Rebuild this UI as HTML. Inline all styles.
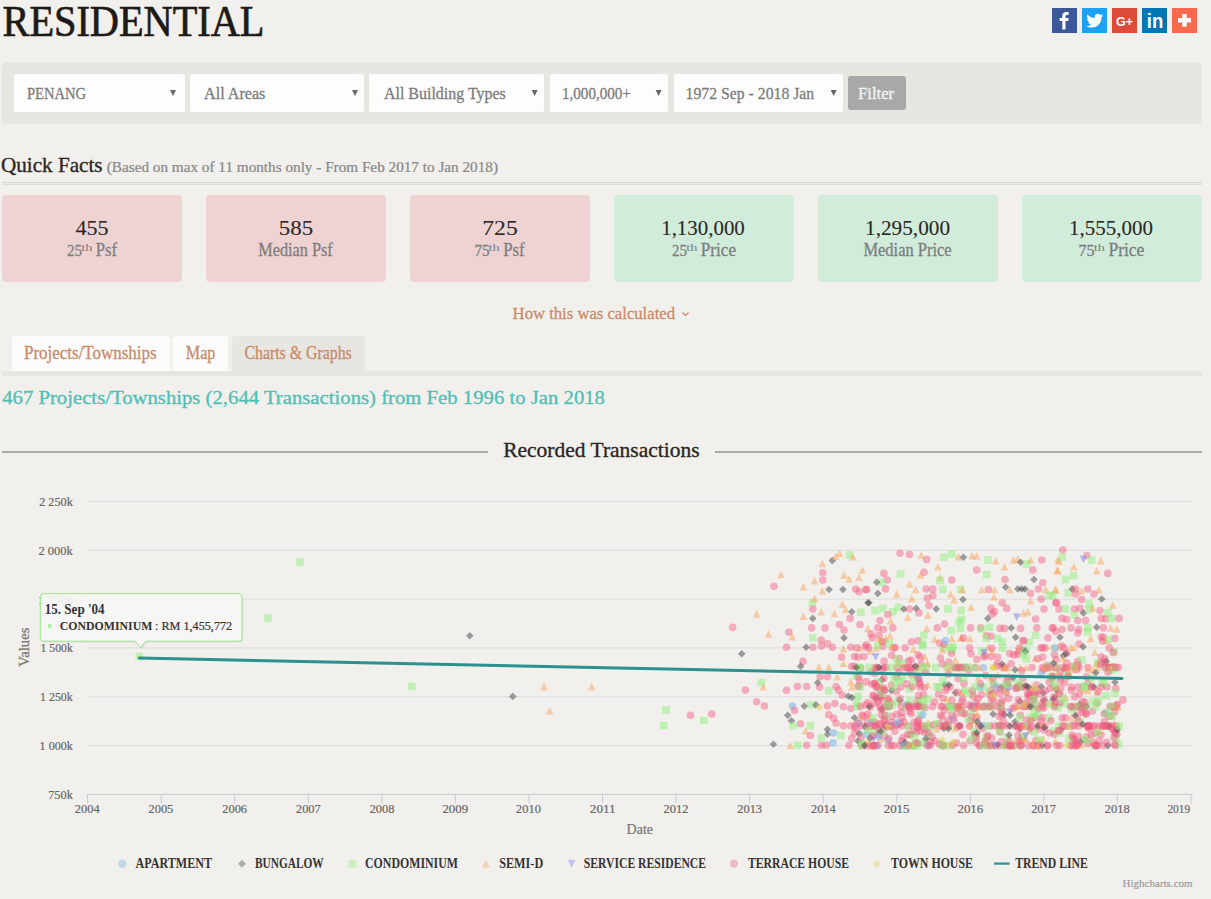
<!DOCTYPE html>
<html><head><meta charset="utf-8"><title>Residential</title>
<style>
html,body{margin:0;padding:0;}
body{width:1211px;height:899px;overflow:hidden;background:#f2f0ec;position:relative;font-family:"Liberation Serif", serif;}
svg text{font-family:"Liberation Serif", serif;}
</style></head><body>
<div style="position:absolute;left:1052px;top:8px;width:25px;height:25px;background:#3b5998;border-radius:0;"></div><div style="position:absolute;left:1082px;top:8px;width:25px;height:25px;background:#1da1f2;border-radius:0;"></div><div style="position:absolute;left:1112px;top:8px;width:25px;height:25px;background:#dd4b39;border-radius:0;"></div><div style="position:absolute;left:1142px;top:8px;width:25px;height:25px;background:#0077b5;border-radius:0;"></div><div style="position:absolute;left:1172px;top:8px;width:25px;height:25px;background:#f8694d;border-radius:0;"></div><div style="position:absolute;left:2px;top:62px;width:1200px;height:62px;background:#e8e6e1;border-radius:4px;"></div><div style="position:absolute;left:14px;top:74px;width:171px;height:38px;background:#fdfdfd;border-radius:2px;"></div><div style="position:absolute;left:190px;top:74px;width:174px;height:38px;background:#fdfdfd;border-radius:2px;"></div><div style="position:absolute;left:369px;top:74px;width:175px;height:38px;background:#fdfdfd;border-radius:2px;"></div><div style="position:absolute;left:550px;top:74px;width:118px;height:38px;background:#fdfdfd;border-radius:2px;"></div><div style="position:absolute;left:674px;top:74px;width:169px;height:38px;background:#fdfdfd;border-radius:2px;"></div><div style="position:absolute;left:848px;top:76px;width:58px;height:34px;background:#a8a8a8;border-radius:3px;"></div><div style="position:absolute;left:2px;top:182px;width:1200px;height:1px;background:#d6d4cf;border-radius:0;"></div><div style="position:absolute;left:2px;top:184px;width:1200px;height:1px;background:#dedcd7;border-radius:0;"></div><div style="position:absolute;left:2px;top:195px;width:180px;height:87px;background:#efd3d3;border-radius:4px;"></div><div style="position:absolute;left:206px;top:195px;width:180px;height:87px;background:#efd3d3;border-radius:4px;"></div><div style="position:absolute;left:410px;top:195px;width:180px;height:87px;background:#efd3d3;border-radius:4px;"></div><div style="position:absolute;left:614px;top:195px;width:180px;height:87px;background:#d1ecdb;border-radius:4px;"></div><div style="position:absolute;left:818px;top:195px;width:180px;height:87px;background:#d1ecdb;border-radius:4px;"></div><div style="position:absolute;left:1022px;top:195px;width:180px;height:87px;background:#d1ecdb;border-radius:4px;"></div><div style="position:absolute;left:12px;top:336px;width:158px;height:36px;background:#fcfcfc;border-radius:4px 4px 0 0;"></div><div style="position:absolute;left:173px;top:336px;width:55px;height:36px;background:#fcfcfc;border-radius:4px 4px 0 0;"></div><div style="position:absolute;left:232px;top:336px;width:133px;height:36px;background:#e8e6e1;border-radius:4px 4px 0 0;"></div><div style="position:absolute;left:2px;top:371px;width:1200px;height:5px;background:#e8e6e1;border-radius:0;"></div><div style="position:absolute;left:2px;top:451px;width:486px;height:2px;background:#aba9a4;border-radius:0;"></div><div style="position:absolute;left:715px;top:451px;width:487px;height:2px;background:#aba9a4;border-radius:0;"></div>
<svg width="1211" height="899" style="position:absolute;left:0;top:0">
<text x="2.50" y="35.6" font-size="43.66" fill="#1e1a18" stroke="#1e1a18" stroke-width="0.70" textLength="262.00" lengthAdjust="spacingAndGlyphs">RESIDENTIAL</text><path transform="translate(1052,8)" fill="#fff" d="M10.3 21.4V13.1H7.6V10H10.3V7.9C10.3 5.3 11.8 4 14.2 4C15.3 4 16.3 4.1 16.6 4.1V6.9H15C13.7 6.9 13.5 7.5 13.5 8.4V10H16.6L16.2 13.1H13.5V21.4Z"/><path transform="translate(1086.4,12.3) scale(0.7)" fill="#fff" d="M23.954 4.569c-.885.389-1.83.654-2.825.775 1.014-.611 1.794-1.574 2.163-2.723-.951.555-2.005.959-3.127 1.184-.896-.959-2.173-1.559-3.591-1.559-2.717 0-4.92 2.203-4.92 4.917 0 .39.045.765.127 1.124C7.691 8.094 4.066 6.13 1.64 3.161c-.427.722-.666 1.561-.666 2.475 0 1.71.87 3.213 2.188 4.096-.807-.026-1.566-.248-2.228-.616v.061c0 2.385 1.693 4.374 3.946 4.827-.413.111-.849.171-1.296.171-.314 0-.615-.03-.916-.086.631 1.953 2.445 3.377 4.604 3.417-1.68 1.319-3.809 2.105-6.102 2.105-.39 0-.779-.023-1.17-.067 2.189 1.394 4.768 2.209 7.557 2.209 9.054 0 13.999-7.496 13.999-13.986 0-.209 0-.42-.015-.63.961-.689 1.8-1.56 2.46-2.548l-.047-.02z"/><text x="1116" y="26" font-size="13.5" font-weight="bold" fill="#fff" textLength="17" lengthAdjust="spacingAndGlyphs" style="font-family:'Liberation Sans',sans-serif">G+</text><text x="1146.8" y="28.2" font-size="20" font-weight="bold" fill="#fff" textLength="16.5" lengthAdjust="spacingAndGlyphs" style="font-family:'Liberation Sans',sans-serif">in</text><path fill="#fff" d="M1178 18H1191V22.4H1178Z M1182.3 14H1186.7V26.8H1182.3Z"/><text x="27.00" y="99.0" font-size="16.79" fill="#7a7a7a" stroke="#7a7a7a" stroke-width="0.27" textLength="59.00" lengthAdjust="spacingAndGlyphs">PENANG</text><path d="M170.0 90 L176.0 90 L173.0 96 Z" fill="#666"/><text x="204.00" y="99.0" font-size="17.30" fill="#7a7a7a" stroke="#7a7a7a" stroke-width="0.28" textLength="61.40" lengthAdjust="spacingAndGlyphs">All Areas</text><path d="M352.0 90 L358.0 90 L355.0 96 Z" fill="#666"/><text x="384.00" y="99.0" font-size="17.30" fill="#7a7a7a" stroke="#7a7a7a" stroke-width="0.28" textLength="121.80" lengthAdjust="spacingAndGlyphs">All Building Types</text><path d="M531.6 90 L537.6 90 L534.6 96 Z" fill="#666"/><text x="562.00" y="99.0" font-size="16.79" fill="#7a7a7a" stroke="#7a7a7a" stroke-width="0.27" textLength="68.80" lengthAdjust="spacingAndGlyphs">1,000,000+</text><path d="M655.6 90 L661.6 90 L658.6 96 Z" fill="#666"/><text x="685.60" y="99.0" font-size="17.30" fill="#7a7a7a" stroke="#7a7a7a" stroke-width="0.28" textLength="128.60" lengthAdjust="spacingAndGlyphs">1972 Sep - 2018 Jan</text><path d="M830.7 90 L836.7 90 L833.7 96 Z" fill="#666"/><text x="858.00" y="99.0" font-size="17.30" fill="#f4f4f4" stroke="#f4f4f4" stroke-width="0.28" textLength="36.20" lengthAdjust="spacingAndGlyphs">Filter</text><text x="1.00" y="171.8" font-size="20.13" fill="#2a2624" stroke="#2a2624" stroke-width="0.32" textLength="101.60" lengthAdjust="spacingAndGlyphs">Quick Facts</text><text x="106.80" y="171.8" font-size="14.50" fill="#888" stroke="#888" stroke-width="0.23" textLength="391.20" lengthAdjust="spacingAndGlyphs">(Based on max of 11 months only - From Feb 2017 to Jan 2018)</text><text x="512.60" y="319.2" font-size="17.61" fill="#c98a68" stroke="#c98a68" stroke-width="0.28" textLength="162.40" lengthAdjust="spacingAndGlyphs">How this was calculated</text><path d="M682.5 312.5 L685.5 315.5 L688.5 312.5" stroke="#c98a68" stroke-width="1.2" fill="none"/><text x="24.00" y="359.3" font-size="19.34" fill="#c98a68" stroke="#c98a68" stroke-width="0.31" textLength="132.60" lengthAdjust="spacingAndGlyphs">Projects/Townships</text><text x="185.80" y="359.3" font-size="19.34" fill="#c98a68" stroke="#c98a68" stroke-width="0.31" textLength="29.60" lengthAdjust="spacingAndGlyphs">Map</text><text x="244.40" y="359.3" font-size="19.34" fill="#c98a68" stroke="#c98a68" stroke-width="0.31" textLength="107.40" lengthAdjust="spacingAndGlyphs">Charts &amp; Graphs</text><text x="2.20" y="404.3" font-size="19.50" fill="#4ebfb6" stroke="#4ebfb6" stroke-width="0.31" textLength="602.80" lengthAdjust="spacingAndGlyphs">467 Projects/Townships (2,644 Transactions) from Feb 1996 to Jan 2018</text><text x="503.20" y="457.2" font-size="21.54" fill="#2a2624" stroke="#2a2624" stroke-width="0.34" textLength="196.40" lengthAdjust="spacingAndGlyphs">Recorded Transactions</text><text x="75.40" y="234.5" font-size="21.37" fill="#2a2624" stroke="#2a2624" stroke-width="0.09" textLength="33.20" lengthAdjust="spacingAndGlyphs">455</text><text x="278.80" y="234.5" font-size="21.37" fill="#2a2624" stroke="#2a2624" stroke-width="0.09" textLength="34.40" lengthAdjust="spacingAndGlyphs">585</text><text x="482.20" y="234.5" font-size="21.37" fill="#2a2624" stroke="#2a2624" stroke-width="0.09" textLength="35.60" lengthAdjust="spacingAndGlyphs">725</text><text x="661.20" y="234.5" font-size="21.37" fill="#2a2624" stroke="#2a2624" stroke-width="0.09" textLength="83.60" lengthAdjust="spacingAndGlyphs">1,130,000</text><text x="865.00" y="234.5" font-size="21.37" fill="#2a2624" stroke="#2a2624" stroke-width="0.09" textLength="85.00" lengthAdjust="spacingAndGlyphs">1,295,000</text><text x="1069.00" y="234.5" font-size="21.37" fill="#2a2624" stroke="#2a2624" stroke-width="0.09" textLength="84.00" lengthAdjust="spacingAndGlyphs">1,555,000</text><text x="67.00" y="255.8" font-size="17.25" fill="#7d7d7d" stroke="#7d7d7d" stroke-width="0.28" textLength="15.00" lengthAdjust="spacingAndGlyphs">25</text><text x="81.20" y="250.8" font-size="11.00" fill="#7d7d7d" textLength="11.20" lengthAdjust="spacingAndGlyphs">th</text><text x="95.80" y="255.8" font-size="17.77" fill="#7d7d7d" stroke="#7d7d7d" stroke-width="0.28" textLength="21.20" lengthAdjust="spacingAndGlyphs">Psf</text><text x="258.20" y="255.8" font-size="17.77" fill="#7d7d7d" stroke="#7d7d7d" stroke-width="0.28" textLength="74.60" lengthAdjust="spacingAndGlyphs">Median Psf</text><text x="474.40" y="255.8" font-size="17.25" fill="#7d7d7d" stroke="#7d7d7d" stroke-width="0.28" textLength="15.00" lengthAdjust="spacingAndGlyphs">75</text><text x="488.60" y="250.8" font-size="11.00" fill="#7d7d7d" textLength="11.20" lengthAdjust="spacingAndGlyphs">th</text><text x="503.20" y="255.8" font-size="17.77" fill="#7d7d7d" stroke="#7d7d7d" stroke-width="0.28" textLength="21.40" lengthAdjust="spacingAndGlyphs">Psf</text><text x="672.00" y="255.8" font-size="17.25" fill="#7d7d7d" stroke="#7d7d7d" stroke-width="0.28" textLength="15.00" lengthAdjust="spacingAndGlyphs">25</text><text x="686.20" y="250.8" font-size="11.00" fill="#7d7d7d" textLength="11.20" lengthAdjust="spacingAndGlyphs">th</text><text x="700.80" y="255.8" font-size="17.77" fill="#7d7d7d" stroke="#7d7d7d" stroke-width="0.28" textLength="35.20" lengthAdjust="spacingAndGlyphs">Price</text><text x="863.40" y="255.8" font-size="17.77" fill="#7d7d7d" stroke="#7d7d7d" stroke-width="0.28" textLength="88.20" lengthAdjust="spacingAndGlyphs">Median Price</text><text x="1078.60" y="255.8" font-size="17.25" fill="#7d7d7d" stroke="#7d7d7d" stroke-width="0.28" textLength="16.00" lengthAdjust="spacingAndGlyphs">75</text><text x="1093.80" y="250.8" font-size="11.00" fill="#7d7d7d" textLength="11.20" lengthAdjust="spacingAndGlyphs">th</text><text x="1108.40" y="255.8" font-size="17.77" fill="#7d7d7d" stroke="#7d7d7d" stroke-width="0.28" textLength="36.00" lengthAdjust="spacingAndGlyphs">Price</text><rect x="88" y="745.1" width="1104" height="1" fill="#dcdcdc"/><rect x="88" y="696.3" width="1104" height="1" fill="#dcdcdc"/><rect x="88" y="647.4" width="1104" height="1" fill="#dcdcdc"/><rect x="88" y="598.6" width="1104" height="1" fill="#dcdcdc"/><rect x="88" y="549.8" width="1104" height="1" fill="#dcdcdc"/><rect x="88" y="501.0" width="1104" height="1" fill="#dcdcdc"/><rect x="87" y="793.9" width="1106" height="1" fill="#c8ccd4"/><rect x="87.1" y="794" width="1" height="9.5" fill="#c8ccd4"/><rect x="160.7" y="794" width="1" height="9.5" fill="#c8ccd4"/><rect x="234.2" y="794" width="1" height="9.5" fill="#c8ccd4"/><rect x="307.8" y="794" width="1" height="9.5" fill="#c8ccd4"/><rect x="381.3" y="794" width="1" height="9.5" fill="#c8ccd4"/><rect x="454.9" y="794" width="1" height="9.5" fill="#c8ccd4"/><rect x="528.5" y="794" width="1" height="9.5" fill="#c8ccd4"/><rect x="602.0" y="794" width="1" height="9.5" fill="#c8ccd4"/><rect x="675.6" y="794" width="1" height="9.5" fill="#c8ccd4"/><rect x="749.1" y="794" width="1" height="9.5" fill="#c8ccd4"/><rect x="822.7" y="794" width="1" height="9.5" fill="#c8ccd4"/><rect x="896.3" y="794" width="1" height="9.5" fill="#c8ccd4"/><rect x="969.8" y="794" width="1" height="9.5" fill="#c8ccd4"/><rect x="1043.4" y="794" width="1" height="9.5" fill="#c8ccd4"/><rect x="1116.9" y="794" width="1" height="9.5" fill="#c8ccd4"/><rect x="1190.5" y="794" width="1" height="9.5" fill="#c8ccd4"/><text x="74.80" y="812.6" font-size="11.60" fill="#666" stroke="#666" stroke-width="0.19" textLength="24.80" lengthAdjust="spacingAndGlyphs">2004</text><text x="148.52" y="812.6" font-size="11.60" fill="#666" stroke="#666" stroke-width="0.19" textLength="24.80" lengthAdjust="spacingAndGlyphs">2005</text><text x="222.24" y="812.6" font-size="11.60" fill="#666" stroke="#666" stroke-width="0.19" textLength="24.80" lengthAdjust="spacingAndGlyphs">2006</text><text x="295.96" y="812.6" font-size="11.60" fill="#666" stroke="#666" stroke-width="0.19" textLength="24.80" lengthAdjust="spacingAndGlyphs">2007</text><text x="369.68" y="812.6" font-size="11.60" fill="#666" stroke="#666" stroke-width="0.19" textLength="24.80" lengthAdjust="spacingAndGlyphs">2008</text><text x="442.40" y="812.6" font-size="11.60" fill="#666" stroke="#666" stroke-width="0.19" textLength="25.80" lengthAdjust="spacingAndGlyphs">2009</text><text x="516.12" y="812.6" font-size="11.60" fill="#666" stroke="#666" stroke-width="0.19" textLength="24.80" lengthAdjust="spacingAndGlyphs">2010</text><text x="589.84" y="812.6" font-size="11.60" fill="#666" stroke="#666" stroke-width="0.19" textLength="25.80" lengthAdjust="spacingAndGlyphs">2011</text><text x="663.56" y="812.6" font-size="11.60" fill="#666" stroke="#666" stroke-width="0.19" textLength="24.80" lengthAdjust="spacingAndGlyphs">2012</text><text x="737.28" y="812.6" font-size="11.60" fill="#666" stroke="#666" stroke-width="0.19" textLength="24.80" lengthAdjust="spacingAndGlyphs">2013</text><text x="811.00" y="812.6" font-size="11.60" fill="#666" stroke="#666" stroke-width="0.19" textLength="24.80" lengthAdjust="spacingAndGlyphs">2014</text><text x="883.72" y="812.6" font-size="11.60" fill="#666" stroke="#666" stroke-width="0.19" textLength="25.80" lengthAdjust="spacingAndGlyphs">2015</text><text x="957.44" y="812.6" font-size="11.60" fill="#666" stroke="#666" stroke-width="0.19" textLength="25.80" lengthAdjust="spacingAndGlyphs">2016</text><text x="1031.16" y="812.6" font-size="11.60" fill="#666" stroke="#666" stroke-width="0.19" textLength="24.80" lengthAdjust="spacingAndGlyphs">2017</text><text x="1104.88" y="812.6" font-size="11.60" fill="#666" stroke="#666" stroke-width="0.19" textLength="24.80" lengthAdjust="spacingAndGlyphs">2018</text><text x="1167.40" y="812.6" font-size="11.60" fill="#666" stroke="#666" stroke-width="0.19" textLength="22.80" lengthAdjust="spacingAndGlyphs">2019</text><text x="39.20" y="506.0" font-size="13.05" fill="#666" stroke="#666" stroke-width="0.21" textLength="33.60" lengthAdjust="spacingAndGlyphs">2 250k</text><text x="38.40" y="554.8" font-size="13.05" fill="#666" stroke="#666" stroke-width="0.21" textLength="34.40" lengthAdjust="spacingAndGlyphs">2 000k</text><text x="38.20" y="603.6" font-size="13.05" fill="#666" stroke="#666" stroke-width="0.21" textLength="34.60" lengthAdjust="spacingAndGlyphs">1 750k</text><text x="40.60" y="652.4" font-size="13.05" fill="#666" stroke="#666" stroke-width="0.21" textLength="32.20" lengthAdjust="spacingAndGlyphs">1 500k</text><text x="40.00" y="701.3" font-size="13.05" fill="#666" stroke="#666" stroke-width="0.21" textLength="32.80" lengthAdjust="spacingAndGlyphs">1 250k</text><text x="39.60" y="750.1" font-size="13.05" fill="#666" stroke="#666" stroke-width="0.21" textLength="33.20" lengthAdjust="spacingAndGlyphs">1 000k</text><text x="48.20" y="798.9" font-size="13.05" fill="#666" stroke="#666" stroke-width="0.21" textLength="24.60" lengthAdjust="spacingAndGlyphs">750k</text><g transform="translate(28.9,666.8) rotate(-90)"><text x="0.00" y="0.0" font-size="15.57" fill="#777" stroke="#777" stroke-width="0.25" textLength="39.20" lengthAdjust="spacingAndGlyphs">Values</text></g><text x="626.60" y="833.8" font-size="13.84" fill="#777" stroke="#777" stroke-width="0.22" textLength="26.40" lengthAdjust="spacingAndGlyphs">Date</text><text x="1122.60" y="887.2" font-size="11.32" fill="#999" stroke="#999" stroke-width="0.18" textLength="70.00" lengthAdjust="spacingAndGlyphs">Highcharts.com</text><g><rect x="135.6" y="652.8" width="7.6" height="7.6" fill="#90ed7d" fill-opacity="0.5"/><rect x="296.2" y="558.2" width="7.6" height="7.6" fill="#90ed7d" fill-opacity="0.5"/><rect x="264.2" y="614.2" width="7.6" height="7.6" fill="#90ed7d" fill-opacity="0.5"/><rect x="407.9" y="682.7" width="7.6" height="7.6" fill="#90ed7d" fill-opacity="0.5"/><path d="M469.8 631.9L473.6 635.7L469.8 639.5L466.0 635.7Z" fill="#434348" fill-opacity="0.5"/><path d="M512.8 692.6L516.6 696.4L512.8 700.2L509.0 696.4Z" fill="#434348" fill-opacity="0.5"/><path d="M544.0 682.7L547.8 690.3L540.2 690.3Z" fill="#f7a35c" fill-opacity="0.5"/><path d="M549.7 706.8L553.5 714.4L545.9 714.4Z" fill="#f7a35c" fill-opacity="0.5"/><path d="M591.7 682.7L595.5 690.3L587.9 690.3Z" fill="#f7a35c" fill-opacity="0.5"/><rect x="662.2" y="706.2" width="7.6" height="7.6" fill="#90ed7d" fill-opacity="0.5"/><rect x="659.9" y="721.7" width="7.6" height="7.6" fill="#90ed7d" fill-opacity="0.5"/><circle cx="690.5" cy="715.2" r="3.8" fill="#f15c80" fill-opacity="0.46"/><rect x="700.0" y="716.7" width="7.6" height="7.6" fill="#90ed7d" fill-opacity="0.5"/><circle cx="711.7" cy="714.0" r="3.8" fill="#f15c80" fill-opacity="0.46"/><circle cx="732.6" cy="627.4" r="3.8" fill="#f15c80" fill-opacity="0.46"/><path d="M756.6 610.1L760.4 617.7L752.8 617.7Z" fill="#f7a35c" fill-opacity="0.5"/><path d="M768.5 630.2L772.3 637.8L764.7 637.8Z" fill="#f7a35c" fill-opacity="0.5"/><path d="M741.7 650.0L745.5 653.8L741.7 657.6L737.9 653.8Z" fill="#434348" fill-opacity="0.5"/><circle cx="745.4" cy="690.0" r="3.8" fill="#f15c80" fill-opacity="0.46"/><circle cx="756.6" cy="701.7" r="3.8" fill="#f15c80" fill-opacity="0.46"/><circle cx="764.5" cy="706.0" r="3.8" fill="#f15c80" fill-opacity="0.46"/><rect x="757.4" y="678.7" width="7.6" height="7.6" fill="#90ed7d" fill-opacity="0.5"/><path d="M763.2 683.0L767.0 690.6L759.4 690.6Z" fill="#f7a35c" fill-opacity="0.5"/><path d="M773.4 740.4L777.2 744.2L773.4 748.0L769.6 744.2Z" fill="#434348" fill-opacity="0.5"/><path d="M781.1 570.7L784.9 578.3L777.3 578.3Z" fill="#f7a35c" fill-opacity="0.5"/><circle cx="773.9" cy="586.2" r="3.8" fill="#f15c80" fill-opacity="0.46"/><path d="M803.4 582.9L807.2 590.5L799.6 590.5Z" fill="#f7a35c" fill-opacity="0.5"/><path d="M814.5 576.8L818.3 584.4L810.7 584.4Z" fill="#f7a35c" fill-opacity="0.5"/><path d="M822.3 559.6L826.1 567.2L818.5 567.2Z" fill="#f7a35c" fill-opacity="0.5"/><circle cx="822.8" cy="572.8" r="3.8" fill="#f15c80" fill-opacity="0.46"/><circle cx="822.8" cy="580.0" r="3.8" fill="#f15c80" fill-opacity="0.46"/><path d="M832.3 556.8L836.1 560.6L832.3 564.4L828.5 560.6Z" fill="#434348" fill-opacity="0.5"/><path d="M835.6 552.3L839.4 559.9L831.8 559.9Z" fill="#f7a35c" fill-opacity="0.5"/><path d="M839.5 549.5L843.3 557.1L835.7 557.1Z" fill="#f7a35c" fill-opacity="0.5"/><rect x="845.7" y="551.2" width="7.6" height="7.6" fill="#90ed7d" fill-opacity="0.5"/><path d="M852.9 552.9L856.7 560.5L849.1 560.5Z" fill="#f7a35c" fill-opacity="0.5"/><path d="M822.3 586.8L826.1 594.4L818.5 594.4Z" fill="#f7a35c" fill-opacity="0.5"/><path d="M829.0 585.7L832.8 589.5L829.0 593.3L825.2 589.5Z" fill="#434348" fill-opacity="0.5"/><path d="M842.9 585.7L846.7 589.5L842.9 593.3L839.1 589.5Z" fill="#434348" fill-opacity="0.5"/><path d="M844.0 571.2L847.8 578.8L840.2 578.8Z" fill="#f7a35c" fill-opacity="0.5"/><path d="M849.0 575.2L852.8 582.8L845.2 582.8Z" fill="#f7a35c" fill-opacity="0.5"/><path d="M862.3 566.2L866.1 573.8L858.5 573.8Z" fill="#f7a35c" fill-opacity="0.5"/><path d="M859.0 573.5L862.8 581.1L855.2 581.1Z" fill="#f7a35c" fill-opacity="0.5"/><circle cx="855.6" cy="589.0" r="3.8" fill="#f15c80" fill-opacity="0.46"/><circle cx="859.0" cy="591.7" r="3.8" fill="#f15c80" fill-opacity="0.46"/><circle cx="865.7" cy="589.5" r="3.8" fill="#f15c80" fill-opacity="0.46"/><rect x="808.5" y="599.0" width="7.6" height="7.6" fill="#90ed7d" fill-opacity="0.5"/><path d="M814.5 594.6L818.3 602.2L810.7 602.2Z" fill="#f7a35c" fill-opacity="0.5"/><circle cx="812.8" cy="609.0" r="3.8" fill="#f15c80" fill-opacity="0.46"/><path d="M821.2 607.9L825.0 615.5L817.4 615.5Z" fill="#f7a35c" fill-opacity="0.5"/><path d="M803.4 612.4L807.2 620.0L799.6 620.0Z" fill="#f7a35c" fill-opacity="0.5"/><path d="M812.8 614.6L816.6 618.4L812.8 622.2L809.0 618.4Z" fill="#434348" fill-opacity="0.5"/><path d="M834.5 609.6L838.3 617.2L830.7 617.2Z" fill="#f7a35c" fill-opacity="0.5"/><path d="M842.3 600.2L846.1 607.8L838.5 607.8Z" fill="#f7a35c" fill-opacity="0.5"/><path d="M845.6 605.7L849.4 613.3L841.8 613.3Z" fill="#f7a35c" fill-opacity="0.5"/><path d="M851.8 607.9L855.6 611.7L851.8 615.5L848.0 611.7Z" fill="#434348" fill-opacity="0.5"/><rect x="856.9" y="608.5" width="7.6" height="7.6" fill="#90ed7d" fill-opacity="0.5"/><path d="M867.9 599.0L871.7 602.8L867.9 606.6L864.1 602.8Z" fill="#434348" fill-opacity="0.5"/><circle cx="850.1" cy="618.4" r="3.8" fill="#f15c80" fill-opacity="0.46"/><circle cx="811.7" cy="627.9" r="3.8" fill="#f15c80" fill-opacity="0.46"/><circle cx="825.0" cy="627.9" r="3.8" fill="#f15c80" fill-opacity="0.46"/><circle cx="839.5" cy="624.5" r="3.8" fill="#f15c80" fill-opacity="0.46"/><circle cx="844.0" cy="630.1" r="3.8" fill="#f15c80" fill-opacity="0.46"/><circle cx="860.1" cy="624.5" r="3.8" fill="#f15c80" fill-opacity="0.46"/><circle cx="788.9" cy="632.3" r="3.8" fill="#f15c80" fill-opacity="0.46"/><path d="M792.2 633.0L796.0 640.6L788.4 640.6Z" fill="#f7a35c" fill-opacity="0.5"/><rect x="809.0" y="634.1" width="7.6" height="7.6" fill="#90ed7d" fill-opacity="0.5"/><path d="M844.0 634.1L847.8 637.9L844.0 641.7L840.2 637.9Z" fill="#434348" fill-opacity="0.5"/><circle cx="821.2" cy="640.1" r="3.8" fill="#f15c80" fill-opacity="0.46"/><circle cx="900.0" cy="553.3" r="3.8" fill="#f15c80" fill-opacity="0.46"/><circle cx="909.5" cy="554.5" r="3.8" fill="#f15c80" fill-opacity="0.46"/><path d="M921.2 551.2L925.0 558.8L917.4 558.8Z" fill="#f7a35c" fill-opacity="0.5"/><circle cx="926.7" cy="559.5" r="3.8" fill="#f15c80" fill-opacity="0.46"/><rect x="940.2" y="553.4" width="7.6" height="7.6" fill="#90ed7d" fill-opacity="0.5"/><rect x="948.0" y="550.1" width="7.6" height="7.6" fill="#90ed7d" fill-opacity="0.5"/><path d="M958.4 552.9L962.2 560.5L954.6 560.5Z" fill="#f7a35c" fill-opacity="0.5"/><path d="M963.4 553.4L967.2 557.2L963.4 561.0L959.6 557.2Z" fill="#434348" fill-opacity="0.5"/><path d="M937.9 562.9L941.7 570.5L934.1 570.5Z" fill="#f7a35c" fill-opacity="0.5"/><circle cx="924.0" cy="572.3" r="3.8" fill="#f15c80" fill-opacity="0.46"/><path d="M920.6 571.2L924.4 578.8L916.8 578.8Z" fill="#f7a35c" fill-opacity="0.5"/><circle cx="883.9" cy="573.4" r="3.8" fill="#f15c80" fill-opacity="0.46"/><circle cx="887.2" cy="580.0" r="3.8" fill="#f15c80" fill-opacity="0.46"/><rect x="896.8" y="570.1" width="7.6" height="7.6" fill="#90ed7d" fill-opacity="0.5"/><rect x="877.9" y="578.5" width="7.6" height="7.6" fill="#90ed7d" fill-opacity="0.5"/><path d="M876.7 578.5L880.5 582.3L876.7 586.1L872.9 582.3Z" fill="#434348" fill-opacity="0.5"/><path d="M940.0 573.5L943.8 581.1L936.2 581.1Z" fill="#f7a35c" fill-opacity="0.5"/><rect x="936.2" y="576.8" width="7.6" height="7.6" fill="#90ed7d" fill-opacity="0.5"/><circle cx="951.8" cy="580.0" r="3.8" fill="#f15c80" fill-opacity="0.46"/><path d="M909.5 580.1L913.3 587.7L905.7 587.7Z" fill="#f7a35c" fill-opacity="0.5"/><circle cx="866.7" cy="589.5" r="3.8" fill="#f15c80" fill-opacity="0.46"/><circle cx="885.6" cy="589.0" r="3.8" fill="#f15c80" fill-opacity="0.46"/><path d="M877.8 589.6L881.6 593.4L877.8 597.2L874.0 593.4Z" fill="#434348" fill-opacity="0.5"/><path d="M896.7 590.2L900.5 597.8L892.9 597.8Z" fill="#f7a35c" fill-opacity="0.5"/><path d="M915.6 585.7L919.4 593.3L911.8 593.3Z" fill="#f7a35c" fill-opacity="0.5"/><circle cx="926.2" cy="589.0" r="3.8" fill="#f15c80" fill-opacity="0.46"/><circle cx="932.9" cy="589.0" r="3.8" fill="#f15c80" fill-opacity="0.46"/><circle cx="932.9" cy="595.6" r="3.8" fill="#f15c80" fill-opacity="0.46"/><circle cx="927.3" cy="598.4" r="3.8" fill="#f15c80" fill-opacity="0.46"/><rect x="939.1" y="585.7" width="7.6" height="7.6" fill="#90ed7d" fill-opacity="0.5"/><path d="M950.7 590.2L954.5 597.8L946.9 597.8Z" fill="#f7a35c" fill-opacity="0.5"/><rect x="956.9" y="585.7" width="7.6" height="7.6" fill="#90ed7d" fill-opacity="0.5"/><path d="M954.0 596.2L957.8 603.8L950.2 603.8Z" fill="#f7a35c" fill-opacity="0.5"/><path d="M962.9 595.7L966.7 599.5L962.9 603.3L959.1 599.5Z" fill="#434348" fill-opacity="0.5"/><path d="M911.7 594.6L915.5 602.2L907.9 602.2Z" fill="#f7a35c" fill-opacity="0.5"/><path d="M868.9 599.0L872.7 602.8L868.9 606.6L865.1 602.8Z" fill="#434348" fill-opacity="0.5"/><circle cx="929.0" cy="605.6" r="3.8" fill="#f15c80" fill-opacity="0.46"/><path d="M936.2 605.2L940.0 609.0L936.2 612.8L932.4 609.0Z" fill="#434348" fill-opacity="0.5"/><rect x="944.1" y="605.2" width="7.6" height="7.6" fill="#90ed7d" fill-opacity="0.5"/><rect x="957.4" y="606.8" width="7.6" height="7.6" fill="#90ed7d" fill-opacity="0.5"/><rect x="871.2" y="606.8" width="7.6" height="7.6" fill="#90ed7d" fill-opacity="0.5"/><rect x="879.0" y="604.6" width="7.6" height="7.6" fill="#90ed7d" fill-opacity="0.5"/><rect x="889.0" y="607.9" width="7.6" height="7.6" fill="#90ed7d" fill-opacity="0.5"/><rect x="894.6" y="603.5" width="7.6" height="7.6" fill="#90ed7d" fill-opacity="0.5"/><circle cx="887.8" cy="614.5" r="3.8" fill="#f15c80" fill-opacity="0.46"/><path d="M903.9 605.2L907.7 609.0L903.9 612.8L900.1 609.0Z" fill="#434348" fill-opacity="0.5"/><circle cx="909.5" cy="609.0" r="3.8" fill="#f15c80" fill-opacity="0.46"/><path d="M916.2 604.6L920.0 608.4L916.2 612.2L912.4 608.4Z" fill="#434348" fill-opacity="0.5"/><circle cx="919.0" cy="612.9" r="3.8" fill="#f15c80" fill-opacity="0.46"/><path d="M907.8 613.5L911.6 621.1L904.0 621.1Z" fill="#f7a35c" fill-opacity="0.5"/><path d="M927.8 611.2L931.6 618.8L924.0 618.8Z" fill="#f7a35c" fill-opacity="0.5"/><circle cx="880.0" cy="620.6" r="3.8" fill="#f15c80" fill-opacity="0.46"/><circle cx="877.8" cy="627.9" r="3.8" fill="#f15c80" fill-opacity="0.46"/><circle cx="883.4" cy="629.5" r="3.8" fill="#f15c80" fill-opacity="0.46"/><circle cx="892.8" cy="627.9" r="3.8" fill="#f15c80" fill-opacity="0.46"/><path d="M890.6 616.8L894.4 624.4L886.8 624.4Z" fill="#f7a35c" fill-opacity="0.5"/><rect x="955.7" y="618.0" width="7.6" height="7.6" fill="#90ed7d" fill-opacity="0.5"/><circle cx="937.3" cy="627.9" r="3.8" fill="#f15c80" fill-opacity="0.46"/><circle cx="944.5" cy="624.0" r="3.8" fill="#f15c80" fill-opacity="0.46"/><path d="M926.7 624.6L930.5 632.2L922.9 632.2Z" fill="#f7a35c" fill-opacity="0.5"/><path d="M867.8 624.6L871.6 632.2L864.0 632.2Z" fill="#f7a35c" fill-opacity="0.5"/><circle cx="871.1" cy="634.0" r="3.8" fill="#f15c80" fill-opacity="0.46"/><circle cx="872.2" cy="637.9" r="3.8" fill="#f15c80" fill-opacity="0.46"/><path d="M885.6 634.6L889.4 642.2L881.8 642.2Z" fill="#f7a35c" fill-opacity="0.5"/><circle cx="917.8" cy="640.7" r="3.8" fill="#f15c80" fill-opacity="0.46"/><path d="M934.5 635.2L938.3 642.8L930.7 642.8Z" fill="#f7a35c" fill-opacity="0.5"/><rect x="947.4" y="626.8" width="7.6" height="7.6" fill="#90ed7d" fill-opacity="0.5"/><rect x="956.9" y="624.6" width="7.6" height="7.6" fill="#90ed7d" fill-opacity="0.5"/><path d="M951.8 634.6L955.6 642.2L948.0 642.2Z" fill="#f7a35c" fill-opacity="0.5"/><path d="M960.7 634.1L964.5 641.7L956.9 641.7Z" fill="#f7a35c" fill-opacity="0.5"/><path d="M972.2 551.8L976.0 559.4L968.4 559.4Z" fill="#f7a35c" fill-opacity="0.5"/><path d="M976.7 551.8L980.5 559.4L972.9 559.4Z" fill="#f7a35c" fill-opacity="0.5"/><rect x="984.0" y="556.2" width="7.6" height="7.6" fill="#90ed7d" fill-opacity="0.5"/><path d="M995.6 556.8L999.4 564.4L991.8 564.4Z" fill="#f7a35c" fill-opacity="0.5"/><path d="M1004.5 562.9L1008.3 570.5L1000.7 570.5Z" fill="#f7a35c" fill-opacity="0.5"/><circle cx="976.7" cy="570.0" r="3.8" fill="#f15c80" fill-opacity="0.46"/><rect x="982.9" y="570.7" width="7.6" height="7.6" fill="#90ed7d" fill-opacity="0.5"/><circle cx="1005.0" cy="579.5" r="3.8" fill="#f15c80" fill-opacity="0.46"/><path d="M1013.4 556.2L1017.2 563.8L1009.6 563.8Z" fill="#f7a35c" fill-opacity="0.5"/><path d="M1017.8 555.1L1021.6 562.7L1014.0 562.7Z" fill="#f7a35c" fill-opacity="0.5"/><path d="M1020.6 558.4L1024.4 562.2L1020.6 566.0L1016.8 562.2Z" fill="#434348" fill-opacity="0.5"/><rect x="1022.9" y="560.1" width="7.6" height="7.6" fill="#90ed7d" fill-opacity="0.5"/><path d="M1030.6 556.2L1034.4 563.8L1026.8 563.8Z" fill="#f7a35c" fill-opacity="0.5"/><circle cx="1041.8" cy="560.0" r="3.8" fill="#f15c80" fill-opacity="0.46"/><circle cx="1032.9" cy="570.0" r="3.8" fill="#f15c80" fill-opacity="0.46"/><path d="M1034.0 575.7L1037.8 579.5L1034.0 583.3L1030.2 579.5Z" fill="#434348" fill-opacity="0.5"/><circle cx="1042.9" cy="582.8" r="3.8" fill="#f15c80" fill-opacity="0.46"/><path d="M1057.3 566.2L1061.1 573.8L1053.5 573.8Z" fill="#f7a35c" fill-opacity="0.5"/><path d="M1057.9 555.7L1061.7 563.3L1054.1 563.3Z" fill="#f7a35c" fill-opacity="0.5"/><path d="M962.2 585.7L966.0 593.3L958.4 593.3Z" fill="#f7a35c" fill-opacity="0.5"/><path d="M981.7 585.7L985.5 593.3L977.9 593.3Z" fill="#f7a35c" fill-opacity="0.5"/><circle cx="988.4" cy="589.5" r="3.8" fill="#f15c80" fill-opacity="0.46"/><path d="M994.5 585.7L998.3 593.3L990.7 593.3Z" fill="#f7a35c" fill-opacity="0.5"/><path d="M1005.6 583.5L1009.4 587.3L1005.6 591.1L1001.8 587.3Z" fill="#434348" fill-opacity="0.5"/><path d="M1010.0 585.7L1013.8 593.3L1006.2 593.3Z" fill="#f7a35c" fill-opacity="0.5"/><path d="M1017.8 585.2L1021.6 589.0L1017.8 592.8L1014.0 589.0Z" fill="#434348" fill-opacity="0.5"/><path d="M1021.7 585.2L1025.5 589.0L1021.7 592.8L1017.9 589.0Z" fill="#434348" fill-opacity="0.5"/><path d="M1025.0 585.2L1028.8 589.0L1025.0 592.8L1021.2 589.0Z" fill="#434348" fill-opacity="0.5"/><circle cx="1030.6" cy="593.4" r="3.8" fill="#f15c80" fill-opacity="0.46"/><circle cx="1038.4" cy="589.0" r="3.8" fill="#f15c80" fill-opacity="0.46"/><path d="M1045.7 585.7L1049.5 593.3L1041.9 593.3Z" fill="#f7a35c" fill-opacity="0.5"/><path d="M1055.1 585.7L1058.9 593.3L1051.3 593.3Z" fill="#f7a35c" fill-opacity="0.5"/><rect x="1045.2" y="591.8" width="7.6" height="7.6" fill="#90ed7d" fill-opacity="0.5"/><path d="M971.1 603.5L974.9 611.1L967.3 611.1Z" fill="#f7a35c" fill-opacity="0.5"/><path d="M993.9 592.9L997.7 600.5L990.1 600.5Z" fill="#f7a35c" fill-opacity="0.5"/><circle cx="991.1" cy="608.4" r="3.8" fill="#f15c80" fill-opacity="0.46"/><circle cx="994.5" cy="611.7" r="3.8" fill="#f15c80" fill-opacity="0.46"/><circle cx="1002.3" cy="602.8" r="3.8" fill="#f15c80" fill-opacity="0.46"/><circle cx="1006.7" cy="608.4" r="3.8" fill="#f15c80" fill-opacity="0.46"/><circle cx="992.3" cy="614.0" r="3.8" fill="#f15c80" fill-opacity="0.46"/><path d="M987.8 614.6L991.6 618.4L987.8 622.2L984.0 618.4Z" fill="#434348" fill-opacity="0.5"/><path d="M1023.4 609.1L1027.2 616.7L1019.6 616.7Z" fill="#f7a35c" fill-opacity="0.5"/><path d="M1027.9 607.9L1031.7 615.5L1024.1 615.5Z" fill="#f7a35c" fill-opacity="0.5"/><path d="M1030.6 596.8L1034.4 604.4L1026.8 604.4Z" fill="#f7a35c" fill-opacity="0.5"/><path d="M1012.9 613.5L1020.5 613.5L1016.7 621.1Z" fill="#8085e9" fill-opacity="0.55"/><circle cx="1044.0" cy="609.0" r="3.8" fill="#f15c80" fill-opacity="0.46"/><circle cx="1041.2" cy="599.0" r="3.8" fill="#f15c80" fill-opacity="0.46"/><circle cx="1055.7" cy="602.8" r="3.8" fill="#f15c80" fill-opacity="0.46"/><circle cx="1035.6" cy="619.0" r="3.8" fill="#f15c80" fill-opacity="0.46"/><rect x="957.9" y="615.7" width="7.6" height="7.6" fill="#90ed7d" fill-opacity="0.5"/><circle cx="970.6" cy="627.9" r="3.8" fill="#f15c80" fill-opacity="0.46"/><circle cx="980.6" cy="627.9" r="3.8" fill="#f15c80" fill-opacity="0.46"/><rect x="985.7" y="623.5" width="7.6" height="7.6" fill="#90ed7d" fill-opacity="0.5"/><circle cx="1000.0" cy="628.4" r="3.8" fill="#f15c80" fill-opacity="0.46"/><circle cx="1004.5" cy="628.4" r="3.8" fill="#f15c80" fill-opacity="0.46"/><path d="M1011.2 624.1L1015.0 627.9L1011.2 631.7L1007.4 627.9Z" fill="#434348" fill-opacity="0.5"/><circle cx="1020.6" cy="628.4" r="3.8" fill="#f15c80" fill-opacity="0.46"/><circle cx="1036.8" cy="627.9" r="3.8" fill="#f15c80" fill-opacity="0.46"/><circle cx="1052.3" cy="627.9" r="3.8" fill="#f15c80" fill-opacity="0.46"/><circle cx="986.7" cy="635.7" r="3.8" fill="#f15c80" fill-opacity="0.46"/><circle cx="991.1" cy="636.2" r="3.8" fill="#f15c80" fill-opacity="0.46"/><rect x="994.0" y="634.6" width="7.6" height="7.6" fill="#90ed7d" fill-opacity="0.5"/><path d="M1015.6 633.5L1019.4 637.3L1015.6 641.1L1011.8 637.3Z" fill="#434348" fill-opacity="0.5"/><rect x="1031.8" y="631.3" width="7.6" height="7.6" fill="#90ed7d" fill-opacity="0.5"/><circle cx="1047.9" cy="637.9" r="3.8" fill="#f15c80" fill-opacity="0.46"/><path d="M970.0 634.6L973.8 642.2L966.2 642.2Z" fill="#f7a35c" fill-opacity="0.5"/><path d="M961.7 633.5L965.5 641.1L957.9 641.1Z" fill="#f7a35c" fill-opacity="0.5"/><circle cx="1062.8" cy="550.0" r="3.8" fill="#f15c80" fill-opacity="0.46"/><rect x="1058.4" y="553.4" width="7.6" height="7.6" fill="#90ed7d" fill-opacity="0.5"/><path d="M1058.9 557.3L1062.7 564.9L1055.1 564.9Z" fill="#f7a35c" fill-opacity="0.5"/><circle cx="1086.7" cy="555.6" r="3.8" fill="#f15c80" fill-opacity="0.46"/><path d="M1079.6 555.7L1087.2 555.7L1083.4 563.3Z" fill="#8085e9" fill-opacity="0.55"/><rect x="1087.9" y="556.2" width="7.6" height="7.6" fill="#90ed7d" fill-opacity="0.5"/><path d="M1100.6 556.8L1104.4 564.4L1096.8 564.4Z" fill="#f7a35c" fill-opacity="0.5"/><path d="M1073.9 562.9L1077.7 570.5L1070.1 570.5Z" fill="#f7a35c" fill-opacity="0.5"/><path d="M1057.8 566.8L1061.6 574.4L1054.0 574.4Z" fill="#f7a35c" fill-opacity="0.5"/><path d="M1096.7 566.8L1100.5 574.4L1092.9 574.4Z" fill="#f7a35c" fill-opacity="0.5"/><circle cx="1107.8" cy="573.4" r="3.8" fill="#f15c80" fill-opacity="0.46"/><rect x="1061.8" y="575.7" width="7.6" height="7.6" fill="#90ed7d" fill-opacity="0.5"/><rect x="1069.6" y="571.8" width="7.6" height="7.6" fill="#90ed7d" fill-opacity="0.5"/><path d="M1056.1 586.2L1059.9 593.8L1052.3 593.8Z" fill="#f7a35c" fill-opacity="0.5"/><rect x="1049.0" y="591.8" width="7.6" height="7.6" fill="#90ed7d" fill-opacity="0.5"/><rect x="1064.6" y="589.0" width="7.6" height="7.6" fill="#90ed7d" fill-opacity="0.5"/><path d="M1072.2 585.2L1076.0 589.0L1072.2 592.8L1068.4 589.0Z" fill="#434348" fill-opacity="0.5"/><circle cx="1075.6" cy="589.0" r="3.8" fill="#f15c80" fill-opacity="0.46"/><circle cx="1075.6" cy="594.0" r="3.8" fill="#f15c80" fill-opacity="0.46"/><path d="M1081.7 586.8L1085.5 594.4L1077.9 594.4Z" fill="#f7a35c" fill-opacity="0.5"/><circle cx="1087.8" cy="589.0" r="3.8" fill="#f15c80" fill-opacity="0.46"/><circle cx="1094.0" cy="594.0" r="3.8" fill="#f15c80" fill-opacity="0.46"/><path d="M1099.0 585.7L1102.8 593.3L1095.2 593.3Z" fill="#f7a35c" fill-opacity="0.5"/><circle cx="1081.7" cy="599.5" r="3.8" fill="#f15c80" fill-opacity="0.46"/><path d="M1101.7 595.2L1105.5 599.0L1101.7 602.8L1097.9 599.0Z" fill="#434348" fill-opacity="0.5"/><path d="M1112.8 601.2L1116.6 608.8L1109.0 608.8Z" fill="#f7a35c" fill-opacity="0.5"/><circle cx="1056.7" cy="602.8" r="3.8" fill="#f15c80" fill-opacity="0.46"/><circle cx="1058.9" cy="609.0" r="3.8" fill="#f15c80" fill-opacity="0.46"/><rect x="1061.8" y="605.2" width="7.6" height="7.6" fill="#90ed7d" fill-opacity="0.5"/><circle cx="1074.5" cy="609.0" r="3.8" fill="#f15c80" fill-opacity="0.46"/><circle cx="1080.0" cy="608.4" r="3.8" fill="#f15c80" fill-opacity="0.46"/><path d="M1083.4 609.1L1087.2 612.9L1083.4 616.7L1079.6 612.9Z" fill="#434348" fill-opacity="0.5"/><rect x="1085.1" y="600.2" width="7.6" height="7.6" fill="#90ed7d" fill-opacity="0.5"/><rect x="1085.1" y="605.7" width="7.6" height="7.6" fill="#90ed7d" fill-opacity="0.5"/><path d="M1092.8 604.0L1096.6 611.6L1089.0 611.6Z" fill="#f7a35c" fill-opacity="0.5"/><circle cx="1100.0" cy="610.6" r="3.8" fill="#f15c80" fill-opacity="0.46"/><rect x="1104.0" y="609.1" width="7.6" height="7.6" fill="#90ed7d" fill-opacity="0.5"/><circle cx="1119.0" cy="618.4" r="3.8" fill="#f15c80" fill-opacity="0.46"/><circle cx="1062.2" cy="618.4" r="3.8" fill="#f15c80" fill-opacity="0.46"/><circle cx="1066.7" cy="619.5" r="3.8" fill="#f15c80" fill-opacity="0.46"/><rect x="1070.7" y="611.2" width="7.6" height="7.6" fill="#90ed7d" fill-opacity="0.5"/><circle cx="1077.8" cy="620.6" r="3.8" fill="#f15c80" fill-opacity="0.46"/><circle cx="1085.6" cy="620.6" r="3.8" fill="#f15c80" fill-opacity="0.46"/><circle cx="1101.2" cy="618.4" r="3.8" fill="#f15c80" fill-opacity="0.46"/><circle cx="1105.6" cy="619.0" r="3.8" fill="#f15c80" fill-opacity="0.46"/><rect x="1107.9" y="614.6" width="7.6" height="7.6" fill="#90ed7d" fill-opacity="0.5"/><circle cx="1053.3" cy="627.9" r="3.8" fill="#f15c80" fill-opacity="0.46"/><circle cx="1062.2" cy="629.5" r="3.8" fill="#f15c80" fill-opacity="0.46"/><circle cx="1071.1" cy="627.9" r="3.8" fill="#f15c80" fill-opacity="0.46"/><circle cx="1078.9" cy="629.5" r="3.8" fill="#f15c80" fill-opacity="0.46"/><rect x="1084.0" y="624.1" width="7.6" height="7.6" fill="#90ed7d" fill-opacity="0.5"/><rect x="1084.0" y="628.0" width="7.6" height="7.6" fill="#90ed7d" fill-opacity="0.5"/><path d="M1096.7 623.5L1100.5 627.3L1096.7 631.1L1092.9 627.3Z" fill="#434348" fill-opacity="0.5"/><circle cx="1103.4" cy="627.9" r="3.8" fill="#f15c80" fill-opacity="0.46"/><path d="M1110.6 624.1L1114.4 631.7L1106.8 631.7Z" fill="#f7a35c" fill-opacity="0.5"/><path d="M1116.7 625.2L1120.5 632.8L1112.9 632.8Z" fill="#f7a35c" fill-opacity="0.5"/><circle cx="1103.4" cy="637.3" r="3.8" fill="#f15c80" fill-opacity="0.46"/><path d="M1060.0 633.5L1063.8 637.3L1060.0 641.1L1056.2 637.3Z" fill="#434348" fill-opacity="0.5"/><path d="M1090.6 634.6L1094.4 642.2L1086.8 642.2Z" fill="#f7a35c" fill-opacity="0.5"/><circle cx="1077.8" cy="632.9" r="3.8" fill="#f15c80" fill-opacity="0.46"/><circle cx="786.5" cy="647.3" r="3.8" fill="#f15c80" fill-opacity="0.46"/><path d="M806.1 643.5L809.9 647.3L806.1 651.1L802.3 647.3Z" fill="#434348" fill-opacity="0.5"/><circle cx="812.8" cy="647.3" r="3.8" fill="#f15c80" fill-opacity="0.46"/><circle cx="821.4" cy="646.1" r="3.8" fill="#f15c80" fill-opacity="0.46"/><circle cx="827.5" cy="643.7" r="3.8" fill="#f15c80" fill-opacity="0.46"/><circle cx="832.4" cy="647.3" r="3.8" fill="#f15c80" fill-opacity="0.46"/><path d="M843.4 644.8L847.2 652.4L839.6 652.4Z" fill="#f7a35c" fill-opacity="0.5"/><circle cx="850.8" cy="647.3" r="3.8" fill="#f15c80" fill-opacity="0.46"/><circle cx="803.0" cy="661.4" r="3.8" fill="#f15c80" fill-opacity="0.46"/><path d="M800.6 662.5L804.4 666.3L800.6 670.1L796.8 666.3Z" fill="#434348" fill-opacity="0.5"/><path d="M819.0 663.1L822.8 670.7L815.2 670.7Z" fill="#f7a35c" fill-opacity="0.5"/><path d="M828.8 663.1L832.6 670.7L825.0 670.7Z" fill="#f7a35c" fill-opacity="0.5"/><circle cx="841.6" cy="657.1" r="3.8" fill="#f15c80" fill-opacity="0.46"/><path d="M843.4 659.5L847.2 667.1L839.6 667.1Z" fill="#f7a35c" fill-opacity="0.5"/><circle cx="854.5" cy="656.5" r="3.8" fill="#f15c80" fill-opacity="0.46"/><circle cx="858.1" cy="657.1" r="3.8" fill="#f15c80" fill-opacity="0.46"/><circle cx="854.5" cy="666.3" r="3.8" fill="#f15c80" fill-opacity="0.46"/><circle cx="860.6" cy="668.2" r="3.8" fill="#f15c80" fill-opacity="0.46"/><circle cx="820.2" cy="676.7" r="3.8" fill="#f15c80" fill-opacity="0.46"/><circle cx="827.5" cy="676.7" r="3.8" fill="#f15c80" fill-opacity="0.46"/><circle cx="786.5" cy="690.2" r="3.8" fill="#f15c80" fill-opacity="0.46"/><circle cx="797.5" cy="686.5" r="3.8" fill="#f15c80" fill-opacity="0.46"/><circle cx="806.7" cy="686.5" r="3.8" fill="#f15c80" fill-opacity="0.46"/><path d="M817.7 679.0L821.5 682.8L817.7 686.6L813.9 682.8Z" fill="#434348" fill-opacity="0.5"/><circle cx="819.6" cy="687.1" r="3.8" fill="#f15c80" fill-opacity="0.46"/><rect x="825.0" y="687.0" width="7.6" height="7.6" fill="#90ed7d" fill-opacity="0.5"/><path d="M837.3 672.9L841.1 680.5L833.5 680.5Z" fill="#f7a35c" fill-opacity="0.5"/><circle cx="836.1" cy="686.5" r="3.8" fill="#f15c80" fill-opacity="0.46"/><circle cx="838.5" cy="690.2" r="3.8" fill="#f15c80" fill-opacity="0.46"/><circle cx="842.2" cy="695.1" r="3.8" fill="#f15c80" fill-opacity="0.46"/><path d="M848.3 692.5L852.1 696.3L848.3 700.1L844.5 696.3Z" fill="#434348" fill-opacity="0.5"/><rect x="854.3" y="692.5" width="7.6" height="7.6" fill="#90ed7d" fill-opacity="0.5"/><circle cx="859.4" cy="680.4" r="3.8" fill="#f15c80" fill-opacity="0.46"/><circle cx="858.1" cy="686.5" r="3.8" fill="#f15c80" fill-opacity="0.46"/><path d="M850.8 677.8L854.6 685.4L847.0 685.4Z" fill="#f7a35c" fill-opacity="0.5"/><circle cx="792.6" cy="706.1" r="3.8" fill="#7cb5ec" fill-opacity="0.55"/><circle cx="794.5" cy="710.4" r="3.8" fill="#f15c80" fill-opacity="0.46"/><path d="M804.3 702.3L808.1 706.1L804.3 709.9L800.5 706.1Z" fill="#434348" fill-opacity="0.5"/><rect x="807.2" y="701.1" width="7.6" height="7.6" fill="#90ed7d" fill-opacity="0.5"/><path d="M815.9 701.1L819.7 704.9L815.9 708.7L812.1 704.9Z" fill="#434348" fill-opacity="0.5"/><path d="M819.6 703.5L823.4 707.3L819.6 711.1L815.8 707.3Z" fill="#e4d354" fill-opacity="0.55"/><circle cx="827.5" cy="706.1" r="3.8" fill="#f15c80" fill-opacity="0.46"/><circle cx="834.9" cy="703.6" r="3.8" fill="#f15c80" fill-opacity="0.46"/><circle cx="843.4" cy="706.7" r="3.8" fill="#f15c80" fill-opacity="0.46"/><circle cx="850.8" cy="708.5" r="3.8" fill="#f15c80" fill-opacity="0.46"/><rect x="853.1" y="699.8" width="7.6" height="7.6" fill="#90ed7d" fill-opacity="0.5"/><circle cx="865.5" cy="704.9" r="3.8" fill="#f15c80" fill-opacity="0.46"/><circle cx="828.8" cy="714.7" r="3.8" fill="#f15c80" fill-opacity="0.46"/><circle cx="833.6" cy="718.3" r="3.8" fill="#f15c80" fill-opacity="0.46"/><circle cx="836.1" cy="723.2" r="3.8" fill="#f15c80" fill-opacity="0.46"/><path d="M787.7 711.5L791.5 715.3L787.7 719.1L783.9 715.3Z" fill="#434348" fill-opacity="0.5"/><path d="M791.4 717.0L795.2 720.8L791.4 724.6L787.6 720.8Z" fill="#434348" fill-opacity="0.5"/><rect x="789.5" y="721.9" width="7.6" height="7.6" fill="#90ed7d" fill-opacity="0.5"/><circle cx="800.6" cy="723.8" r="3.8" fill="#f15c80" fill-opacity="0.46"/><rect x="806.6" y="721.9" width="7.6" height="7.6" fill="#90ed7d" fill-opacity="0.5"/><path d="M805.5 726.8L809.3 734.4L801.7 734.4Z" fill="#f7a35c" fill-opacity="0.5"/><circle cx="810.4" cy="735.5" r="3.8" fill="#f15c80" fill-opacity="0.46"/><path d="M827.5 725.6L831.3 729.4L827.5 733.2L823.7 729.4Z" fill="#434348" fill-opacity="0.5"/><path d="M827.5 730.4L831.3 734.2L827.5 738.0L823.7 734.2Z" fill="#434348" fill-opacity="0.5"/><circle cx="833.6" cy="733.0" r="3.8" fill="#7cb5ec" fill-opacity="0.55"/><rect x="837.2" y="731.7" width="7.6" height="7.6" fill="#90ed7d" fill-opacity="0.5"/><circle cx="843.4" cy="725.7" r="3.8" fill="#f15c80" fill-opacity="0.46"/><circle cx="850.8" cy="725.7" r="3.8" fill="#f15c80" fill-opacity="0.46"/><circle cx="854.5" cy="733.0" r="3.8" fill="#f15c80" fill-opacity="0.46"/><circle cx="855.7" cy="728.1" r="3.8" fill="#f15c80" fill-opacity="0.46"/><path d="M854.5 713.9L858.3 717.7L854.5 721.5L850.7 717.7Z" fill="#434348" fill-opacity="0.5"/><path d="M859.4 729.8L863.2 733.6L859.4 737.4L855.6 733.6Z" fill="#434348" fill-opacity="0.5"/><circle cx="866.7" cy="734.2" r="3.8" fill="#7cb5ec" fill-opacity="0.55"/><path d="M790.2 741.5L794.0 749.1L786.4 749.1Z" fill="#f7a35c" fill-opacity="0.5"/><rect x="793.7" y="741.5" width="7.6" height="7.6" fill="#90ed7d" fill-opacity="0.5"/><circle cx="806.7" cy="745.3" r="3.8" fill="#f15c80" fill-opacity="0.46"/><circle cx="821.4" cy="745.3" r="3.8" fill="#f15c80" fill-opacity="0.46"/><circle cx="826.3" cy="745.3" r="3.8" fill="#f15c80" fill-opacity="0.46"/><rect x="817.6" y="734.1" width="7.6" height="7.6" fill="#90ed7d" fill-opacity="0.5"/><circle cx="833.0" cy="742.8" r="3.8" fill="#7cb5ec" fill-opacity="0.55"/><circle cx="848.9" cy="745.3" r="3.8" fill="#f15c80" fill-opacity="0.46"/><circle cx="863.0" cy="745.3" r="3.8" fill="#f15c80" fill-opacity="0.46"/><circle cx="888.5" cy="706.5" r="3.8" fill="#f15c80" fill-opacity="0.46"/><circle cx="987.1" cy="737.1" r="3.8" fill="#f15c80" fill-opacity="0.46"/><circle cx="1075.4" cy="667.5" r="3.8" fill="#f15c80" fill-opacity="0.46"/><circle cx="879.3" cy="723.7" r="3.8" fill="#f15c80" fill-opacity="0.46"/><rect x="945.9" y="741.8" width="7.6" height="7.6" fill="#90ed7d" fill-opacity="0.5"/><rect x="961.2" y="686.9" width="7.6" height="7.6" fill="#90ed7d" fill-opacity="0.5"/><path d="M1040.1 702.7L1043.9 710.3L1036.3 710.3Z" fill="#f7a35c" fill-opacity="0.5"/><rect x="1054.4" y="703.8" width="7.6" height="7.6" fill="#90ed7d" fill-opacity="0.5"/><rect x="1003.3" y="734.4" width="7.6" height="7.6" fill="#90ed7d" fill-opacity="0.5"/><rect x="921.7" y="739.0" width="7.6" height="7.6" fill="#90ed7d" fill-opacity="0.5"/><circle cx="879.1" cy="729.9" r="3.8" fill="#f15c80" fill-opacity="0.46"/><circle cx="1087.8" cy="727.3" r="3.8" fill="#f15c80" fill-opacity="0.46"/><circle cx="911.3" cy="713.8" r="3.8" fill="#f15c80" fill-opacity="0.46"/><circle cx="948.9" cy="662.0" r="3.8" fill="#f15c80" fill-opacity="0.46"/><rect x="1030.0" y="694.3" width="7.6" height="7.6" fill="#90ed7d" fill-opacity="0.5"/><circle cx="1022.2" cy="726.1" r="3.8" fill="#f15c80" fill-opacity="0.46"/><circle cx="861.3" cy="745.6" r="3.8" fill="#f15c80" fill-opacity="0.46"/><circle cx="1088.6" cy="726.1" r="3.8" fill="#f15c80" fill-opacity="0.46"/><circle cx="880.7" cy="689.2" r="3.8" fill="#f15c80" fill-opacity="0.46"/><circle cx="875.0" cy="667.5" r="3.8" fill="#f15c80" fill-opacity="0.46"/><circle cx="1109.8" cy="706.5" r="3.8" fill="#f15c80" fill-opacity="0.46"/><circle cx="1039.3" cy="725.4" r="3.8" fill="#f15c80" fill-opacity="0.46"/><circle cx="1062.2" cy="718.1" r="3.8" fill="#f15c80" fill-opacity="0.46"/><circle cx="854.8" cy="726.1" r="3.8" fill="#f15c80" fill-opacity="0.46"/><path d="M970.4 722.3L974.2 726.1L970.4 729.9L966.6 726.1Z" fill="#e4d354" fill-opacity="0.55"/><circle cx="1019.3" cy="687.5" r="3.8" fill="#f15c80" fill-opacity="0.46"/><path d="M870.2 647.1L874.0 654.7L866.4 654.7Z" fill="#f7a35c" fill-opacity="0.5"/><circle cx="896.1" cy="725.0" r="3.8" fill="#f15c80" fill-opacity="0.46"/><circle cx="1097.0" cy="703.2" r="3.8" fill="#f15c80" fill-opacity="0.46"/><circle cx="1026.4" cy="720.0" r="3.8" fill="#f15c80" fill-opacity="0.46"/><circle cx="913.3" cy="706.5" r="3.8" fill="#f15c80" fill-opacity="0.46"/><path d="M944.6 681.0L948.4 684.8L944.6 688.6L940.8 684.8Z" fill="#434348" fill-opacity="0.5"/><circle cx="897.4" cy="724.7" r="3.8" fill="#f15c80" fill-opacity="0.46"/><rect x="996.9" y="702.7" width="7.6" height="7.6" fill="#90ed7d" fill-opacity="0.5"/><circle cx="1060.3" cy="671.4" r="3.8" fill="#f15c80" fill-opacity="0.46"/><circle cx="1038.3" cy="729.0" r="3.8" fill="#f15c80" fill-opacity="0.46"/><circle cx="866.8" cy="726.9" r="3.8" fill="#f15c80" fill-opacity="0.46"/><rect x="882.5" y="722.2" width="7.6" height="7.6" fill="#90ed7d" fill-opacity="0.5"/><circle cx="940.5" cy="658.1" r="3.8" fill="#f15c80" fill-opacity="0.46"/><circle cx="968.6" cy="670.0" r="3.8" fill="#f15c80" fill-opacity="0.46"/><circle cx="1115.5" cy="745.6" r="3.8" fill="#f15c80" fill-opacity="0.46"/><circle cx="882.6" cy="646.4" r="3.8" fill="#f15c80" fill-opacity="0.46"/><circle cx="1101.0" cy="734.7" r="3.8" fill="#f15c80" fill-opacity="0.46"/><rect x="960.6" y="663.7" width="7.6" height="7.6" fill="#90ed7d" fill-opacity="0.5"/><path d="M972.2 702.7L976.0 710.3L968.4 710.3Z" fill="#f7a35c" fill-opacity="0.5"/><circle cx="891.4" cy="726.1" r="3.8" fill="#f15c80" fill-opacity="0.46"/><path d="M926.9 722.3L930.7 729.9L923.1 729.9Z" fill="#f7a35c" fill-opacity="0.5"/><circle cx="999.2" cy="693.3" r="3.8" fill="#f15c80" fill-opacity="0.46"/><path d="M955.5 656.2L959.3 663.8L951.7 663.8Z" fill="#f7a35c" fill-opacity="0.5"/><circle cx="942.9" cy="745.6" r="3.8" fill="#f15c80" fill-opacity="0.46"/><circle cx="891.9" cy="716.3" r="3.8" fill="#f15c80" fill-opacity="0.46"/><circle cx="890.3" cy="702.4" r="3.8" fill="#f15c80" fill-opacity="0.46"/><circle cx="978.0" cy="706.5" r="3.8" fill="#f15c80" fill-opacity="0.46"/><circle cx="871.6" cy="745.6" r="3.8" fill="#f15c80" fill-opacity="0.46"/><circle cx="1008.7" cy="698.4" r="3.8" fill="#f15c80" fill-opacity="0.46"/><circle cx="888.1" cy="740.3" r="3.8" fill="#7cb5ec" fill-opacity="0.55"/><path d="M1020.3 724.9L1024.1 728.7L1020.3 732.5L1016.5 728.7Z" fill="#434348" fill-opacity="0.5"/><circle cx="1077.7" cy="661.6" r="3.8" fill="#f15c80" fill-opacity="0.46"/><circle cx="883.6" cy="667.5" r="3.8" fill="#f15c80" fill-opacity="0.46"/><rect x="1016.1" y="741.4" width="7.6" height="7.6" fill="#90ed7d" fill-opacity="0.5"/><rect x="982.1" y="733.8" width="7.6" height="7.6" fill="#90ed7d" fill-opacity="0.5"/><circle cx="867.3" cy="720.7" r="3.8" fill="#f15c80" fill-opacity="0.46"/><circle cx="983.4" cy="667.8" r="3.8" fill="#7cb5ec" fill-opacity="0.55"/><circle cx="917.0" cy="676.8" r="3.8" fill="#f15c80" fill-opacity="0.46"/><circle cx="921.1" cy="663.8" r="3.8" fill="#f15c80" fill-opacity="0.46"/><circle cx="975.3" cy="667.5" r="3.8" fill="#f15c80" fill-opacity="0.46"/><circle cx="1105.7" cy="713.1" r="3.8" fill="#7cb5ec" fill-opacity="0.55"/><path d="M905.0 663.7L908.8 667.5L905.0 671.3L901.2 667.5Z" fill="#e4d354" fill-opacity="0.55"/><path d="M1041.3 682.9L1045.1 686.7L1041.3 690.5L1037.5 686.7Z" fill="#434348" fill-opacity="0.5"/><circle cx="982.7" cy="728.5" r="3.8" fill="#f15c80" fill-opacity="0.46"/><circle cx="1079.1" cy="644.0" r="3.8" fill="#f15c80" fill-opacity="0.46"/><path d="M1044.0 696.7L1047.8 700.5L1044.0 704.3L1040.2 700.5Z" fill="#434348" fill-opacity="0.5"/><path d="M1005.9 708.5L1013.5 708.5L1009.7 716.1Z" fill="#8085e9" fill-opacity="0.55"/><circle cx="1077.6" cy="715.4" r="3.8" fill="#f15c80" fill-opacity="0.46"/><circle cx="899.2" cy="658.5" r="3.8" fill="#f15c80" fill-opacity="0.46"/><rect x="967.6" y="707.1" width="7.6" height="7.6" fill="#90ed7d" fill-opacity="0.5"/><path d="M882.0 705.7L885.8 709.5L882.0 713.3L878.2 709.5Z" fill="#434348" fill-opacity="0.5"/><circle cx="918.7" cy="678.1" r="3.8" fill="#7cb5ec" fill-opacity="0.55"/><circle cx="891.5" cy="685.4" r="3.8" fill="#f15c80" fill-opacity="0.46"/><path d="M885.3 722.3L889.1 726.1L885.3 729.9L881.5 726.1Z" fill="#434348" fill-opacity="0.5"/><circle cx="918.2" cy="654.8" r="3.8" fill="#f15c80" fill-opacity="0.46"/><circle cx="991.7" cy="738.1" r="3.8" fill="#f15c80" fill-opacity="0.46"/><path d="M881.6 637.3L885.4 641.1L881.6 644.9L877.8 641.1Z" fill="#e4d354" fill-opacity="0.55"/><circle cx="915.5" cy="742.9" r="3.8" fill="#f15c80" fill-opacity="0.46"/><rect x="1090.7" y="741.8" width="7.6" height="7.6" fill="#90ed7d" fill-opacity="0.5"/><path d="M1075.1 711.7L1078.9 715.5L1075.1 719.3L1071.3 715.5Z" fill="#434348" fill-opacity="0.5"/><circle cx="991.2" cy="690.2" r="3.8" fill="#f15c80" fill-opacity="0.46"/><circle cx="1063.1" cy="667.4" r="3.8" fill="#f15c80" fill-opacity="0.46"/><circle cx="916.4" cy="732.0" r="3.8" fill="#f15c80" fill-opacity="0.46"/><circle cx="1008.0" cy="687.0" r="3.8" fill="#f15c80" fill-opacity="0.46"/><circle cx="974.2" cy="708.4" r="3.8" fill="#f15c80" fill-opacity="0.46"/><circle cx="1033.3" cy="745.6" r="3.8" fill="#f15c80" fill-opacity="0.46"/><circle cx="1035.5" cy="717.6" r="3.8" fill="#f15c80" fill-opacity="0.46"/><path d="M928.3 719.1L932.1 726.7L924.5 726.7Z" fill="#f7a35c" fill-opacity="0.5"/><circle cx="1030.8" cy="706.5" r="3.8" fill="#f15c80" fill-opacity="0.46"/><circle cx="886.0" cy="705.7" r="3.8" fill="#7cb5ec" fill-opacity="0.55"/><path d="M1053.2 695.9L1057.0 699.7L1053.2 703.5L1049.4 699.7Z" fill="#434348" fill-opacity="0.5"/><circle cx="893.6" cy="647.9" r="3.8" fill="#f15c80" fill-opacity="0.46"/><circle cx="1074.0" cy="739.6" r="3.8" fill="#f15c80" fill-opacity="0.46"/><circle cx="1101.1" cy="637.0" r="3.8" fill="#f15c80" fill-opacity="0.46"/><circle cx="1071.3" cy="745.6" r="3.8" fill="#f15c80" fill-opacity="0.46"/><path d="M917.8 700.7L921.6 704.5L917.8 708.3L914.0 704.5Z" fill="#434348" fill-opacity="0.5"/><path d="M1017.4 703.5L1021.2 707.3L1017.4 711.1L1013.6 707.3Z" fill="#e4d354" fill-opacity="0.55"/><circle cx="1055.7" cy="631.4" r="3.8" fill="#f15c80" fill-opacity="0.46"/><circle cx="978.2" cy="698.8" r="3.8" fill="#f15c80" fill-opacity="0.46"/><circle cx="983.2" cy="706.9" r="3.8" fill="#f15c80" fill-opacity="0.46"/><path d="M868.6 711.8L872.4 719.4L864.8 719.4Z" fill="#f7a35c" fill-opacity="0.5"/><circle cx="999.6" cy="745.6" r="3.8" fill="#f15c80" fill-opacity="0.46"/><circle cx="1043.1" cy="706.5" r="3.8" fill="#f15c80" fill-opacity="0.46"/><rect x="1049.8" y="727.1" width="7.6" height="7.6" fill="#90ed7d" fill-opacity="0.5"/><circle cx="1003.5" cy="721.5" r="3.8" fill="#f15c80" fill-opacity="0.46"/><circle cx="889.1" cy="706.1" r="3.8" fill="#f15c80" fill-opacity="0.46"/><path d="M983.3 702.7L990.9 702.7L987.1 710.3Z" fill="#8085e9" fill-opacity="0.55"/><path d="M1099.6 727.3L1103.4 734.9L1095.8 734.9Z" fill="#f7a35c" fill-opacity="0.5"/><circle cx="1008.0" cy="687.0" r="3.8" fill="#7cb5ec" fill-opacity="0.55"/><circle cx="948.7" cy="726.1" r="3.8" fill="#f15c80" fill-opacity="0.46"/><rect x="899.2" y="659.7" width="7.6" height="7.6" fill="#90ed7d" fill-opacity="0.5"/><circle cx="903.0" cy="737.9" r="3.8" fill="#f15c80" fill-opacity="0.46"/><circle cx="998.9" cy="726.1" r="3.8" fill="#f15c80" fill-opacity="0.46"/><circle cx="925.1" cy="707.8" r="3.8" fill="#f15c80" fill-opacity="0.46"/><circle cx="961.9" cy="701.5" r="3.8" fill="#f15c80" fill-opacity="0.46"/><rect x="899.3" y="741.8" width="7.6" height="7.6" fill="#90ed7d" fill-opacity="0.5"/><rect x="1094.6" y="696.9" width="7.6" height="7.6" fill="#90ed7d" fill-opacity="0.5"/><circle cx="925.1" cy="732.4" r="3.8" fill="#f15c80" fill-opacity="0.46"/><path d="M1114.2 719.6L1118.0 727.2L1110.4 727.2Z" fill="#f7a35c" fill-opacity="0.5"/><circle cx="990.0" cy="726.1" r="3.8" fill="#f15c80" fill-opacity="0.46"/><path d="M858.1 737.2L861.9 741.0L858.1 744.8L854.3 741.0Z" fill="#434348" fill-opacity="0.5"/><circle cx="1012.6" cy="708.5" r="3.8" fill="#f15c80" fill-opacity="0.46"/><rect x="960.7" y="688.7" width="7.6" height="7.6" fill="#90ed7d" fill-opacity="0.5"/><rect x="978.3" y="647.3" width="7.6" height="7.6" fill="#90ed7d" fill-opacity="0.5"/><circle cx="977.6" cy="706.5" r="3.8" fill="#f15c80" fill-opacity="0.46"/><circle cx="987.8" cy="735.6" r="3.8" fill="#f15c80" fill-opacity="0.46"/><path d="M988.2 643.1L992.0 650.7L984.4 650.7Z" fill="#f7a35c" fill-opacity="0.5"/><circle cx="982.8" cy="725.6" r="3.8" fill="#7cb5ec" fill-opacity="0.55"/><path d="M864.9 722.6L868.7 726.4L864.9 730.2L861.1 726.4Z" fill="#434348" fill-opacity="0.5"/><circle cx="1072.3" cy="706.5" r="3.8" fill="#f15c80" fill-opacity="0.46"/><circle cx="897.1" cy="667.5" r="3.8" fill="#f15c80" fill-opacity="0.46"/><circle cx="1022.7" cy="678.4" r="3.8" fill="#f15c80" fill-opacity="0.46"/><path d="M875.7 694.0L879.5 697.8L875.7 701.6L871.9 697.8Z" fill="#434348" fill-opacity="0.5"/><circle cx="946.4" cy="724.2" r="3.8" fill="#f15c80" fill-opacity="0.46"/><circle cx="1073.5" cy="707.7" r="3.8" fill="#f15c80" fill-opacity="0.46"/><circle cx="888.1" cy="726.1" r="3.8" fill="#f15c80" fill-opacity="0.46"/><circle cx="876.2" cy="687.0" r="3.8" fill="#f15c80" fill-opacity="0.46"/><circle cx="1019.3" cy="647.9" r="3.8" fill="#f15c80" fill-opacity="0.46"/><circle cx="873.2" cy="745.6" r="3.8" fill="#f15c80" fill-opacity="0.46"/><rect x="939.8" y="644.1" width="7.6" height="7.6" fill="#90ed7d" fill-opacity="0.5"/><circle cx="959.0" cy="667.5" r="3.8" fill="#f15c80" fill-opacity="0.46"/><circle cx="1107.0" cy="687.0" r="3.8" fill="#f15c80" fill-opacity="0.46"/><rect x="1067.9" y="705.4" width="7.6" height="7.6" fill="#90ed7d" fill-opacity="0.5"/><path d="M1063.3 652.0L1067.1 655.8L1063.3 659.6L1059.5 655.8Z" fill="#434348" fill-opacity="0.5"/><circle cx="875.9" cy="726.1" r="3.8" fill="#f15c80" fill-opacity="0.46"/><rect x="1076.7" y="702.7" width="7.6" height="7.6" fill="#90ed7d" fill-opacity="0.5"/><path d="M991.5 739.9L995.3 747.5L987.7 747.5Z" fill="#f7a35c" fill-opacity="0.5"/><circle cx="1052.5" cy="676.5" r="3.8" fill="#f15c80" fill-opacity="0.46"/><circle cx="1018.9" cy="728.1" r="3.8" fill="#f15c80" fill-opacity="0.46"/><circle cx="1103.7" cy="745.6" r="3.8" fill="#f15c80" fill-opacity="0.46"/><rect x="1018.3" y="733.8" width="7.6" height="7.6" fill="#90ed7d" fill-opacity="0.5"/><circle cx="1072.9" cy="737.6" r="3.8" fill="#f15c80" fill-opacity="0.46"/><path d="M1107.9 741.8L1111.7 745.6L1107.9 749.4L1104.1 745.6Z" fill="#434348" fill-opacity="0.5"/><path d="M1071.3 665.3L1075.1 672.9L1067.5 672.9Z" fill="#f7a35c" fill-opacity="0.5"/><circle cx="873.8" cy="726.1" r="3.8" fill="#f15c80" fill-opacity="0.46"/><circle cx="917.7" cy="701.0" r="3.8" fill="#f15c80" fill-opacity="0.46"/><path d="M986.1 738.0L989.9 741.8L986.1 745.6L982.3 741.8Z" fill="#e4d354" fill-opacity="0.55"/><circle cx="1060.5" cy="680.5" r="3.8" fill="#f15c80" fill-opacity="0.46"/><path d="M871.9 741.8L875.7 749.4L868.1 749.4Z" fill="#f7a35c" fill-opacity="0.5"/><path d="M1117.2 702.7L1121.0 710.3L1113.4 710.3Z" fill="#f7a35c" fill-opacity="0.5"/><path d="M918.8 663.7L922.6 671.3L915.0 671.3Z" fill="#f7a35c" fill-opacity="0.5"/><path d="M1020.4 663.7L1024.2 671.3L1016.6 671.3Z" fill="#f7a35c" fill-opacity="0.5"/><circle cx="919.5" cy="706.5" r="3.8" fill="#f15c80" fill-opacity="0.46"/><rect x="1051.2" y="702.2" width="7.6" height="7.6" fill="#90ed7d" fill-opacity="0.5"/><path d="M1029.9 726.5L1033.7 734.1L1026.1 734.1Z" fill="#f7a35c" fill-opacity="0.5"/><path d="M912.6 741.8L916.4 745.6L912.6 749.4L908.8 745.6Z" fill="#434348" fill-opacity="0.5"/><circle cx="991.2" cy="656.8" r="3.8" fill="#f15c80" fill-opacity="0.46"/><circle cx="1023.2" cy="706.5" r="3.8" fill="#f15c80" fill-opacity="0.46"/><circle cx="1065.5" cy="669.0" r="3.8" fill="#f15c80" fill-opacity="0.46"/><circle cx="1013.7" cy="654.9" r="3.8" fill="#f15c80" fill-opacity="0.46"/><circle cx="1046.5" cy="667.9" r="3.8" fill="#f15c80" fill-opacity="0.46"/><circle cx="1020.5" cy="715.3" r="3.8" fill="#f15c80" fill-opacity="0.46"/><circle cx="1018.7" cy="651.4" r="3.8" fill="#f15c80" fill-opacity="0.46"/><circle cx="1116.3" cy="726.1" r="3.8" fill="#f15c80" fill-opacity="0.46"/><path d="M990.3 676.3L994.1 680.1L990.3 683.9L986.5 680.1Z" fill="#e4d354" fill-opacity="0.55"/><circle cx="1023.5" cy="687.0" r="3.8" fill="#f15c80" fill-opacity="0.46"/><path d="M880.6 734.9L884.4 742.5L876.8 742.5Z" fill="#f7a35c" fill-opacity="0.5"/><circle cx="963.1" cy="713.5" r="3.8" fill="#f15c80" fill-opacity="0.46"/><rect x="1102.9" y="663.7" width="7.6" height="7.6" fill="#90ed7d" fill-opacity="0.5"/><circle cx="882.5" cy="668.8" r="3.8" fill="#f15c80" fill-opacity="0.46"/><rect x="905.4" y="685.1" width="7.6" height="7.6" fill="#90ed7d" fill-opacity="0.5"/><circle cx="881.4" cy="714.9" r="3.8" fill="#f15c80" fill-opacity="0.46"/><circle cx="924.5" cy="687.5" r="3.8" fill="#f15c80" fill-opacity="0.46"/><rect x="1025.3" y="638.3" width="7.6" height="7.6" fill="#90ed7d" fill-opacity="0.5"/><path d="M1097.3 663.7L1101.1 671.3L1093.5 671.3Z" fill="#f7a35c" fill-opacity="0.5"/><circle cx="1028.2" cy="745.6" r="3.8" fill="#f15c80" fill-opacity="0.46"/><path d="M942.6 645.9L946.4 653.5L938.8 653.5Z" fill="#f7a35c" fill-opacity="0.5"/><path d="M1015.0 717.9L1018.8 721.7L1015.0 725.5L1011.2 721.7Z" fill="#434348" fill-opacity="0.5"/><circle cx="1051.9" cy="678.4" r="3.8" fill="#f15c80" fill-opacity="0.46"/><circle cx="885.3" cy="706.5" r="3.8" fill="#f15c80" fill-opacity="0.46"/><circle cx="984.5" cy="744.8" r="3.8" fill="#f15c80" fill-opacity="0.46"/><circle cx="1002.3" cy="700.2" r="3.8" fill="#f15c80" fill-opacity="0.46"/><path d="M867.6 738.3L871.4 742.1L867.6 745.9L863.8 742.1Z" fill="#e4d354" fill-opacity="0.55"/><rect x="1100.6" y="680.0" width="7.6" height="7.6" fill="#90ed7d" fill-opacity="0.5"/><path d="M1019.7 697.4L1023.5 701.2L1019.7 705.0L1015.9 701.2Z" fill="#434348" fill-opacity="0.5"/><circle cx="1059.9" cy="694.4" r="3.8" fill="#f15c80" fill-opacity="0.46"/><path d="M927.7 680.8L931.5 688.4L923.9 688.4Z" fill="#f7a35c" fill-opacity="0.5"/><circle cx="1116.4" cy="705.5" r="3.8" fill="#f15c80" fill-opacity="0.46"/><circle cx="1008.9" cy="740.7" r="3.8" fill="#f15c80" fill-opacity="0.46"/><path d="M997.6 741.0L1001.4 744.8L997.6 748.6L993.8 744.8Z" fill="#434348" fill-opacity="0.5"/><path d="M1015.1 665.9L1018.9 669.7L1015.1 673.5L1011.3 669.7Z" fill="#434348" fill-opacity="0.5"/><rect x="1031.3" y="686.3" width="7.6" height="7.6" fill="#90ed7d" fill-opacity="0.5"/><circle cx="896.9" cy="714.3" r="3.8" fill="#f15c80" fill-opacity="0.46"/><circle cx="934.8" cy="740.8" r="3.8" fill="#f15c80" fill-opacity="0.46"/><path d="M1005.9 740.1L1009.7 747.7L1002.1 747.7Z" fill="#f7a35c" fill-opacity="0.5"/><rect x="1102.3" y="691.8" width="7.6" height="7.6" fill="#90ed7d" fill-opacity="0.5"/><rect x="901.7" y="741.8" width="7.6" height="7.6" fill="#90ed7d" fill-opacity="0.5"/><circle cx="1114.0" cy="730.0" r="3.8" fill="#f15c80" fill-opacity="0.46"/><rect x="909.9" y="741.8" width="7.6" height="7.6" fill="#90ed7d" fill-opacity="0.5"/><rect x="1079.6" y="683.2" width="7.6" height="7.6" fill="#90ed7d" fill-opacity="0.5"/><circle cx="1104.6" cy="658.7" r="3.8" fill="#f15c80" fill-opacity="0.46"/><circle cx="1026.7" cy="726.1" r="3.8" fill="#f15c80" fill-opacity="0.46"/><circle cx="1084.9" cy="706.5" r="3.8" fill="#f15c80" fill-opacity="0.46"/><circle cx="1034.0" cy="701.6" r="3.8" fill="#f15c80" fill-opacity="0.46"/><rect x="958.5" y="706.4" width="7.6" height="7.6" fill="#90ed7d" fill-opacity="0.5"/><circle cx="1041.3" cy="672.8" r="3.8" fill="#7cb5ec" fill-opacity="0.55"/><circle cx="1092.4" cy="711.3" r="3.8" fill="#f15c80" fill-opacity="0.46"/><circle cx="963.6" cy="638.1" r="3.8" fill="#f15c80" fill-opacity="0.46"/><path d="M1071.3 713.4L1075.1 721.0L1067.5 721.0Z" fill="#f7a35c" fill-opacity="0.5"/><rect x="971.6" y="731.2" width="7.6" height="7.6" fill="#90ed7d" fill-opacity="0.5"/><path d="M911.1 670.4L914.9 678.0L907.3 678.0Z" fill="#f7a35c" fill-opacity="0.5"/><circle cx="896.7" cy="677.2" r="3.8" fill="#f15c80" fill-opacity="0.46"/><circle cx="888.0" cy="700.3" r="3.8" fill="#f15c80" fill-opacity="0.46"/><rect x="1060.7" y="700.0" width="7.6" height="7.6" fill="#90ed7d" fill-opacity="0.5"/><circle cx="1086.3" cy="713.9" r="3.8" fill="#f15c80" fill-opacity="0.46"/><circle cx="1108.5" cy="726.1" r="3.8" fill="#f15c80" fill-opacity="0.46"/><circle cx="860.8" cy="737.8" r="3.8" fill="#f15c80" fill-opacity="0.46"/><circle cx="879.9" cy="706.5" r="3.8" fill="#f15c80" fill-opacity="0.46"/><path d="M1032.0 714.9L1035.8 718.7L1032.0 722.5L1028.2 718.7Z" fill="#e4d354" fill-opacity="0.55"/><circle cx="944.1" cy="644.2" r="3.8" fill="#f15c80" fill-opacity="0.46"/><path d="M1043.0 735.0L1046.8 742.6L1039.2 742.6Z" fill="#f7a35c" fill-opacity="0.5"/><rect x="1102.8" y="722.3" width="7.6" height="7.6" fill="#90ed7d" fill-opacity="0.5"/><circle cx="979.9" cy="745.6" r="3.8" fill="#f15c80" fill-opacity="0.46"/><circle cx="1045.1" cy="647.9" r="3.8" fill="#f15c80" fill-opacity="0.46"/><path d="M1086.5 702.7L1090.3 706.5L1086.5 710.3L1082.7 706.5Z" fill="#434348" fill-opacity="0.5"/><path d="M1079.7 700.6L1083.5 704.4L1079.7 708.2L1075.9 704.4Z" fill="#434348" fill-opacity="0.5"/><circle cx="1020.5" cy="745.6" r="3.8" fill="#f15c80" fill-opacity="0.46"/><circle cx="886.8" cy="706.5" r="3.8" fill="#f15c80" fill-opacity="0.46"/><circle cx="1079.0" cy="706.5" r="3.8" fill="#f15c80" fill-opacity="0.46"/><path d="M878.3 663.7L882.1 667.5L878.3 671.3L874.5 667.5Z" fill="#434348" fill-opacity="0.5"/><circle cx="978.8" cy="726.1" r="3.8" fill="#f15c80" fill-opacity="0.46"/><path d="M869.9 734.8L877.5 734.8L873.7 742.4Z" fill="#8085e9" fill-opacity="0.55"/><circle cx="1117.4" cy="704.3" r="3.8" fill="#f15c80" fill-opacity="0.46"/><circle cx="1076.9" cy="706.5" r="3.8" fill="#f15c80" fill-opacity="0.46"/><circle cx="1059.8" cy="745.6" r="3.8" fill="#f15c80" fill-opacity="0.46"/><rect x="980.0" y="683.2" width="7.6" height="7.6" fill="#90ed7d" fill-opacity="0.5"/><path d="M1008.0 663.7L1011.8 671.3L1004.2 671.3Z" fill="#f7a35c" fill-opacity="0.5"/><rect x="858.3" y="739.9" width="7.6" height="7.6" fill="#90ed7d" fill-opacity="0.5"/><circle cx="1087.9" cy="667.5" r="3.8" fill="#f15c80" fill-opacity="0.46"/><circle cx="949.4" cy="706.5" r="3.8" fill="#f15c80" fill-opacity="0.46"/><circle cx="880.1" cy="699.4" r="3.8" fill="#f15c80" fill-opacity="0.46"/><circle cx="1088.1" cy="683.4" r="3.8" fill="#f15c80" fill-opacity="0.46"/><circle cx="908.6" cy="726.1" r="3.8" fill="#f15c80" fill-opacity="0.46"/><circle cx="873.4" cy="745.6" r="3.8" fill="#f15c80" fill-opacity="0.46"/><rect x="987.6" y="741.8" width="7.6" height="7.6" fill="#90ed7d" fill-opacity="0.5"/><circle cx="924.1" cy="729.0" r="3.8" fill="#f15c80" fill-opacity="0.46"/><path d="M887.5 694.7L891.3 702.3L883.7 702.3Z" fill="#f7a35c" fill-opacity="0.5"/><path d="M992.1 647.7L995.9 655.3L988.3 655.3Z" fill="#f7a35c" fill-opacity="0.5"/><circle cx="939.4" cy="643.0" r="3.8" fill="#f15c80" fill-opacity="0.46"/><circle cx="1111.7" cy="706.5" r="3.8" fill="#f15c80" fill-opacity="0.46"/><circle cx="993.6" cy="684.5" r="3.8" fill="#f15c80" fill-opacity="0.46"/><circle cx="1114.9" cy="638.5" r="3.8" fill="#f15c80" fill-opacity="0.46"/><rect x="916.4" y="711.4" width="7.6" height="7.6" fill="#90ed7d" fill-opacity="0.5"/><circle cx="1109.7" cy="667.2" r="3.8" fill="#f15c80" fill-opacity="0.46"/><rect x="1107.4" y="702.7" width="7.6" height="7.6" fill="#90ed7d" fill-opacity="0.5"/><circle cx="881.0" cy="696.4" r="3.8" fill="#f15c80" fill-opacity="0.46"/><circle cx="871.0" cy="671.7" r="3.8" fill="#f15c80" fill-opacity="0.46"/><rect x="898.6" y="675.4" width="7.6" height="7.6" fill="#90ed7d" fill-opacity="0.5"/><circle cx="932.6" cy="706.5" r="3.8" fill="#f15c80" fill-opacity="0.46"/><rect x="1081.3" y="682.3" width="7.6" height="7.6" fill="#90ed7d" fill-opacity="0.5"/><circle cx="928.5" cy="745.6" r="3.8" fill="#7cb5ec" fill-opacity="0.55"/><circle cx="863.9" cy="656.5" r="3.8" fill="#f15c80" fill-opacity="0.46"/><circle cx="1112.1" cy="726.1" r="3.8" fill="#f15c80" fill-opacity="0.46"/><rect x="1013.4" y="679.1" width="7.6" height="7.6" fill="#90ed7d" fill-opacity="0.5"/><rect x="1053.1" y="663.7" width="7.6" height="7.6" fill="#90ed7d" fill-opacity="0.5"/><path d="M1008.8 672.5L1012.6 680.1L1005.0 680.1Z" fill="#f7a35c" fill-opacity="0.5"/><path d="M1088.1 687.0L1091.9 694.6L1084.3 694.6Z" fill="#f7a35c" fill-opacity="0.5"/><rect x="924.0" y="695.2" width="7.6" height="7.6" fill="#90ed7d" fill-opacity="0.5"/><path d="M1081.7 719.5L1085.5 727.1L1077.9 727.1Z" fill="#f7a35c" fill-opacity="0.5"/><circle cx="1005.9" cy="745.6" r="3.8" fill="#f15c80" fill-opacity="0.46"/><circle cx="1101.3" cy="662.6" r="3.8" fill="#f15c80" fill-opacity="0.46"/><circle cx="1011.2" cy="663.7" r="3.8" fill="#f15c80" fill-opacity="0.46"/><circle cx="950.3" cy="686.7" r="3.8" fill="#f15c80" fill-opacity="0.46"/><rect x="989.6" y="679.7" width="7.6" height="7.6" fill="#90ed7d" fill-opacity="0.5"/><path d="M1037.6 722.3L1041.4 726.1L1037.6 729.9L1033.8 726.1Z" fill="#434348" fill-opacity="0.5"/><circle cx="898.8" cy="672.6" r="3.8" fill="#f15c80" fill-opacity="0.46"/><path d="M1019.0 646.4L1026.6 646.4L1022.8 654.0Z" fill="#8085e9" fill-opacity="0.55"/><rect x="1075.9" y="718.0" width="7.6" height="7.6" fill="#90ed7d" fill-opacity="0.5"/><circle cx="920.3" cy="730.9" r="3.8" fill="#f15c80" fill-opacity="0.46"/><path d="M876.2 644.1L880.0 651.7L872.4 651.7Z" fill="#f7a35c" fill-opacity="0.5"/><circle cx="1059.9" cy="702.7" r="3.8" fill="#f15c80" fill-opacity="0.46"/><circle cx="874.2" cy="703.3" r="3.8" fill="#f15c80" fill-opacity="0.46"/><circle cx="861.9" cy="715.4" r="3.8" fill="#f15c80" fill-opacity="0.46"/><path d="M1083.1 643.0L1086.9 646.8L1083.1 650.6L1079.3 646.8Z" fill="#434348" fill-opacity="0.5"/><rect x="1108.5" y="712.4" width="7.6" height="7.6" fill="#90ed7d" fill-opacity="0.5"/><rect x="904.2" y="722.3" width="7.6" height="7.6" fill="#90ed7d" fill-opacity="0.5"/><circle cx="1115.5" cy="731.7" r="3.8" fill="#f15c80" fill-opacity="0.46"/><circle cx="958.3" cy="667.5" r="3.8" fill="#f15c80" fill-opacity="0.46"/><circle cx="899.6" cy="745.6" r="3.8" fill="#f15c80" fill-opacity="0.46"/><circle cx="889.9" cy="726.1" r="3.8" fill="#f15c80" fill-opacity="0.46"/><circle cx="969.4" cy="726.3" r="3.8" fill="#f15c80" fill-opacity="0.46"/><rect x="947.2" y="702.7" width="7.6" height="7.6" fill="#90ed7d" fill-opacity="0.5"/><rect x="915.1" y="697.2" width="7.6" height="7.6" fill="#90ed7d" fill-opacity="0.5"/><rect x="901.7" y="702.7" width="7.6" height="7.6" fill="#90ed7d" fill-opacity="0.5"/><circle cx="1060.2" cy="676.8" r="3.8" fill="#f15c80" fill-opacity="0.46"/><circle cx="870.5" cy="706.7" r="3.8" fill="#f15c80" fill-opacity="0.46"/><circle cx="1002.2" cy="709.6" r="3.8" fill="#f15c80" fill-opacity="0.46"/><circle cx="909.4" cy="711.4" r="3.8" fill="#f15c80" fill-opacity="0.46"/><path d="M1061.1 725.8L1064.9 729.6L1061.1 733.4L1057.3 729.6Z" fill="#434348" fill-opacity="0.5"/><circle cx="1034.7" cy="695.6" r="3.8" fill="#f15c80" fill-opacity="0.46"/><rect x="911.6" y="665.6" width="7.6" height="7.6" fill="#90ed7d" fill-opacity="0.5"/><circle cx="1099.2" cy="740.7" r="3.8" fill="#f15c80" fill-opacity="0.46"/><circle cx="901.5" cy="740.8" r="3.8" fill="#f15c80" fill-opacity="0.46"/><rect x="892.6" y="655.0" width="7.6" height="7.6" fill="#90ed7d" fill-opacity="0.5"/><circle cx="1036.0" cy="740.4" r="3.8" fill="#f15c80" fill-opacity="0.46"/><rect x="856.0" y="663.7" width="7.6" height="7.6" fill="#90ed7d" fill-opacity="0.5"/><path d="M1054.0 694.1L1057.8 697.9L1054.0 701.7L1050.2 697.9Z" fill="#434348" fill-opacity="0.5"/><path d="M924.5 652.4L928.3 660.0L920.7 660.0Z" fill="#f7a35c" fill-opacity="0.5"/><rect x="968.2" y="689.9" width="7.6" height="7.6" fill="#90ed7d" fill-opacity="0.5"/><path d="M882.0 675.9L885.8 679.7L882.0 683.5L878.2 679.7Z" fill="#434348" fill-opacity="0.5"/><circle cx="945.7" cy="726.1" r="3.8" fill="#f15c80" fill-opacity="0.46"/><rect x="1028.3" y="702.7" width="7.6" height="7.6" fill="#90ed7d" fill-opacity="0.5"/><path d="M943.9 724.6L947.7 728.4L943.9 732.2L940.1 728.4Z" fill="#434348" fill-opacity="0.5"/><circle cx="1072.3" cy="725.1" r="3.8" fill="#f15c80" fill-opacity="0.46"/><rect x="970.5" y="727.9" width="7.6" height="7.6" fill="#90ed7d" fill-opacity="0.5"/><circle cx="903.8" cy="721.7" r="3.8" fill="#f15c80" fill-opacity="0.46"/><circle cx="878.0" cy="701.6" r="3.8" fill="#f15c80" fill-opacity="0.46"/><circle cx="1054.3" cy="706.5" r="3.8" fill="#f15c80" fill-opacity="0.46"/><circle cx="996.9" cy="666.6" r="3.8" fill="#f15c80" fill-opacity="0.46"/><circle cx="885.1" cy="725.2" r="3.8" fill="#f15c80" fill-opacity="0.46"/><path d="M1052.1 663.7L1055.9 671.3L1048.3 671.3Z" fill="#f7a35c" fill-opacity="0.5"/><circle cx="999.2" cy="716.6" r="3.8" fill="#f15c80" fill-opacity="0.46"/><rect x="1016.7" y="681.3" width="7.6" height="7.6" fill="#90ed7d" fill-opacity="0.5"/><circle cx="1007.5" cy="725.8" r="3.8" fill="#f15c80" fill-opacity="0.46"/><circle cx="871.5" cy="722.5" r="3.8" fill="#7cb5ec" fill-opacity="0.55"/><circle cx="1079.3" cy="694.1" r="3.8" fill="#f15c80" fill-opacity="0.46"/><rect x="985.3" y="688.7" width="7.6" height="7.6" fill="#90ed7d" fill-opacity="0.5"/><path d="M1096.8 688.1L1100.6 695.7L1093.0 695.7Z" fill="#f7a35c" fill-opacity="0.5"/><circle cx="900.8" cy="687.0" r="3.8" fill="#f15c80" fill-opacity="0.46"/><circle cx="1004.7" cy="667.2" r="3.8" fill="#f15c80" fill-opacity="0.46"/><circle cx="1091.5" cy="687.0" r="3.8" fill="#f15c80" fill-opacity="0.46"/><circle cx="1029.4" cy="695.2" r="3.8" fill="#f15c80" fill-opacity="0.46"/><rect x="952.6" y="663.7" width="7.6" height="7.6" fill="#90ed7d" fill-opacity="0.5"/><circle cx="1085.2" cy="706.5" r="3.8" fill="#f15c80" fill-opacity="0.46"/><circle cx="1000.0" cy="731.9" r="3.8" fill="#f15c80" fill-opacity="0.46"/><rect x="865.1" y="663.7" width="7.6" height="7.6" fill="#90ed7d" fill-opacity="0.5"/><circle cx="1112.3" cy="729.0" r="3.8" fill="#f15c80" fill-opacity="0.46"/><circle cx="912.3" cy="687.0" r="3.8" fill="#f15c80" fill-opacity="0.46"/><circle cx="1042.4" cy="667.5" r="3.8" fill="#f15c80" fill-opacity="0.46"/><path d="M1035.0 654.4L1038.8 662.0L1031.2 662.0Z" fill="#f7a35c" fill-opacity="0.5"/><rect x="870.5" y="728.1" width="7.6" height="7.6" fill="#90ed7d" fill-opacity="0.5"/><rect x="913.4" y="741.8" width="7.6" height="7.6" fill="#90ed7d" fill-opacity="0.5"/><path d="M898.0 658.6L901.8 666.2L894.2 666.2Z" fill="#f7a35c" fill-opacity="0.5"/><circle cx="1088.9" cy="726.1" r="3.8" fill="#f15c80" fill-opacity="0.46"/><circle cx="1088.2" cy="726.1" r="3.8" fill="#f15c80" fill-opacity="0.46"/><rect x="951.5" y="663.7" width="7.6" height="7.6" fill="#90ed7d" fill-opacity="0.5"/><path d="M1015.7 736.5L1019.5 744.1L1011.9 744.1Z" fill="#f7a35c" fill-opacity="0.5"/><circle cx="976.1" cy="702.8" r="3.8" fill="#f15c80" fill-opacity="0.46"/><rect x="935.3" y="683.2" width="7.6" height="7.6" fill="#90ed7d" fill-opacity="0.5"/><circle cx="985.0" cy="741.4" r="3.8" fill="#f15c80" fill-opacity="0.46"/><path d="M1088.0 664.9L1091.8 672.5L1084.2 672.5Z" fill="#f7a35c" fill-opacity="0.5"/><circle cx="1066.7" cy="663.1" r="3.8" fill="#f15c80" fill-opacity="0.46"/><path d="M1051.3 699.4L1055.1 707.0L1047.5 707.0Z" fill="#f7a35c" fill-opacity="0.5"/><circle cx="863.5" cy="716.1" r="3.8" fill="#f15c80" fill-opacity="0.46"/><circle cx="884.2" cy="690.7" r="3.8" fill="#f15c80" fill-opacity="0.46"/><rect x="926.6" y="722.3" width="7.6" height="7.6" fill="#90ed7d" fill-opacity="0.5"/><rect x="995.4" y="722.3" width="7.6" height="7.6" fill="#90ed7d" fill-opacity="0.5"/><circle cx="945.5" cy="640.5" r="3.8" fill="#7cb5ec" fill-opacity="0.55"/><circle cx="1095.4" cy="745.6" r="3.8" fill="#f15c80" fill-opacity="0.46"/><circle cx="1041.6" cy="721.3" r="3.8" fill="#f15c80" fill-opacity="0.46"/><path d="M1026.0 663.7L1029.8 671.3L1022.2 671.3Z" fill="#f7a35c" fill-opacity="0.5"/><circle cx="884.5" cy="719.9" r="3.8" fill="#f15c80" fill-opacity="0.46"/><rect x="1022.4" y="700.9" width="7.6" height="7.6" fill="#90ed7d" fill-opacity="0.5"/><circle cx="859.3" cy="685.7" r="3.8" fill="#f15c80" fill-opacity="0.46"/><circle cx="974.9" cy="734.3" r="3.8" fill="#f15c80" fill-opacity="0.46"/><circle cx="1058.9" cy="694.3" r="3.8" fill="#f15c80" fill-opacity="0.46"/><rect x="996.4" y="701.7" width="7.6" height="7.6" fill="#90ed7d" fill-opacity="0.5"/><circle cx="1043.5" cy="708.1" r="3.8" fill="#f15c80" fill-opacity="0.46"/><circle cx="972.1" cy="706.5" r="3.8" fill="#7cb5ec" fill-opacity="0.55"/><path d="M947.0 663.7L950.8 671.3L943.2 671.3Z" fill="#f7a35c" fill-opacity="0.5"/><circle cx="883.8" cy="678.4" r="3.8" fill="#f15c80" fill-opacity="0.46"/><path d="M947.9 741.8L951.7 745.6L947.9 749.4L944.1 745.6Z" fill="#e4d354" fill-opacity="0.55"/><circle cx="1118.4" cy="667.5" r="3.8" fill="#f15c80" fill-opacity="0.46"/><rect x="954.1" y="702.7" width="7.6" height="7.6" fill="#90ed7d" fill-opacity="0.5"/><path d="M1108.1 722.3L1111.9 726.1L1108.1 729.9L1104.3 726.1Z" fill="#434348" fill-opacity="0.5"/><circle cx="910.7" cy="667.8" r="3.8" fill="#f15c80" fill-opacity="0.46"/><path d="M902.9 701.6L910.5 701.6L906.7 709.2Z" fill="#8085e9" fill-opacity="0.55"/><path d="M891.4 686.9L895.2 690.7L891.4 694.5L887.6 690.7Z" fill="#434348" fill-opacity="0.5"/><path d="M904.8 738.8L908.6 742.6L904.8 746.4L901.0 742.6Z" fill="#434348" fill-opacity="0.5"/><circle cx="888.4" cy="726.1" r="3.8" fill="#7cb5ec" fill-opacity="0.55"/><circle cx="940.7" cy="726.1" r="3.8" fill="#f15c80" fill-opacity="0.46"/><rect x="853.4" y="702.7" width="7.6" height="7.6" fill="#90ed7d" fill-opacity="0.5"/><circle cx="1089.7" cy="729.1" r="3.8" fill="#f15c80" fill-opacity="0.46"/><circle cx="1036.3" cy="685.0" r="3.8" fill="#f15c80" fill-opacity="0.46"/><circle cx="984.0" cy="657.0" r="3.8" fill="#f15c80" fill-opacity="0.46"/><circle cx="919.9" cy="706.5" r="3.8" fill="#f15c80" fill-opacity="0.46"/><rect x="943.2" y="662.7" width="7.6" height="7.6" fill="#90ed7d" fill-opacity="0.5"/><circle cx="1037.7" cy="658.7" r="3.8" fill="#f15c80" fill-opacity="0.46"/><circle cx="962.7" cy="698.9" r="3.8" fill="#f15c80" fill-opacity="0.46"/><circle cx="1122.9" cy="699.9" r="3.8" fill="#f15c80" fill-opacity="0.46"/><circle cx="878.9" cy="635.6" r="3.8" fill="#f15c80" fill-opacity="0.46"/><rect x="932.7" y="683.2" width="7.6" height="7.6" fill="#90ed7d" fill-opacity="0.5"/><circle cx="1043.7" cy="669.4" r="3.8" fill="#f15c80" fill-opacity="0.46"/><circle cx="1016.2" cy="687.9" r="3.8" fill="#f15c80" fill-opacity="0.46"/><circle cx="1103.2" cy="726.1" r="3.8" fill="#f15c80" fill-opacity="0.46"/><circle cx="1023.9" cy="640.5" r="3.8" fill="#f15c80" fill-opacity="0.46"/><circle cx="1076.9" cy="745.6" r="3.8" fill="#f15c80" fill-opacity="0.46"/><circle cx="945.4" cy="690.8" r="3.8" fill="#f15c80" fill-opacity="0.46"/><circle cx="971.0" cy="653.7" r="3.8" fill="#f15c80" fill-opacity="0.46"/><rect x="944.4" y="702.7" width="7.6" height="7.6" fill="#90ed7d" fill-opacity="0.5"/><circle cx="851.7" cy="738.6" r="3.8" fill="#f15c80" fill-opacity="0.46"/><rect x="918.9" y="663.7" width="7.6" height="7.6" fill="#90ed7d" fill-opacity="0.5"/><rect x="1080.5" y="736.5" width="7.6" height="7.6" fill="#90ed7d" fill-opacity="0.5"/><circle cx="1043.8" cy="698.9" r="3.8" fill="#f15c80" fill-opacity="0.46"/><path d="M899.7 696.7L903.5 700.5L899.7 704.3L895.9 700.5Z" fill="#434348" fill-opacity="0.5"/><circle cx="866.3" cy="681.9" r="3.8" fill="#f15c80" fill-opacity="0.46"/><path d="M1056.1 685.8L1059.9 689.6L1056.1 693.4L1052.3 689.6Z" fill="#434348" fill-opacity="0.5"/><path d="M961.5 688.5L965.3 696.1L957.7 696.1Z" fill="#f7a35c" fill-opacity="0.5"/><circle cx="1074.8" cy="696.9" r="3.8" fill="#f15c80" fill-opacity="0.46"/><rect x="996.1" y="727.5" width="7.6" height="7.6" fill="#90ed7d" fill-opacity="0.5"/><circle cx="1072.8" cy="738.9" r="3.8" fill="#f15c80" fill-opacity="0.46"/><circle cx="1008.2" cy="682.8" r="3.8" fill="#f15c80" fill-opacity="0.46"/><circle cx="922.7" cy="714.7" r="3.8" fill="#7cb5ec" fill-opacity="0.55"/><rect x="984.3" y="722.3" width="7.6" height="7.6" fill="#90ed7d" fill-opacity="0.5"/><path d="M1083.7 685.6L1087.5 693.2L1079.9 693.2Z" fill="#f7a35c" fill-opacity="0.5"/><rect x="944.1" y="722.3" width="7.6" height="7.6" fill="#90ed7d" fill-opacity="0.5"/><circle cx="1003.0" cy="667.5" r="3.8" fill="#f15c80" fill-opacity="0.46"/><rect x="1064.9" y="734.8" width="7.6" height="7.6" fill="#90ed7d" fill-opacity="0.5"/><rect x="856.5" y="683.2" width="7.6" height="7.6" fill="#90ed7d" fill-opacity="0.5"/><path d="M1001.9 660.2L1005.7 664.0L1001.9 667.8L998.1 664.0Z" fill="#434348" fill-opacity="0.5"/><circle cx="905.1" cy="647.9" r="3.8" fill="#f15c80" fill-opacity="0.46"/><circle cx="873.1" cy="695.4" r="3.8" fill="#f15c80" fill-opacity="0.46"/><circle cx="1097.3" cy="745.6" r="3.8" fill="#f15c80" fill-opacity="0.46"/><circle cx="1078.0" cy="687.0" r="3.8" fill="#f15c80" fill-opacity="0.46"/><rect x="885.5" y="639.9" width="7.6" height="7.6" fill="#90ed7d" fill-opacity="0.5"/><path d="M1117.8 702.7L1121.6 710.3L1114.0 710.3Z" fill="#f7a35c" fill-opacity="0.5"/><circle cx="997.7" cy="657.4" r="3.8" fill="#f15c80" fill-opacity="0.46"/><rect x="874.6" y="678.1" width="7.6" height="7.6" fill="#90ed7d" fill-opacity="0.5"/><circle cx="1054.3" cy="734.3" r="3.8" fill="#f15c80" fill-opacity="0.46"/><path d="M1012.1 741.8L1015.9 749.4L1008.3 749.4Z" fill="#f7a35c" fill-opacity="0.5"/><path d="M1080.6 737.9L1084.4 741.7L1080.6 745.5L1076.8 741.7Z" fill="#434348" fill-opacity="0.5"/><path d="M942.0 735.7L945.8 739.5L942.0 743.3L938.2 739.5Z" fill="#e4d354" fill-opacity="0.55"/><circle cx="915.2" cy="667.5" r="3.8" fill="#f15c80" fill-opacity="0.46"/><circle cx="1001.4" cy="741.5" r="3.8" fill="#f15c80" fill-opacity="0.46"/><circle cx="1025.6" cy="702.9" r="3.8" fill="#f15c80" fill-opacity="0.46"/><rect x="888.3" y="701.6" width="7.6" height="7.6" fill="#90ed7d" fill-opacity="0.5"/><path d="M979.6 663.7L983.4 671.3L975.8 671.3Z" fill="#f7a35c" fill-opacity="0.5"/><circle cx="995.0" cy="725.7" r="3.8" fill="#f15c80" fill-opacity="0.46"/><circle cx="948.2" cy="720.9" r="3.8" fill="#f15c80" fill-opacity="0.46"/><circle cx="1087.8" cy="743.8" r="3.8" fill="#f15c80" fill-opacity="0.46"/><circle cx="1065.5" cy="717.8" r="3.8" fill="#f15c80" fill-opacity="0.46"/><circle cx="919.8" cy="682.8" r="3.8" fill="#f15c80" fill-opacity="0.46"/><path d="M870.1 734.3L873.9 738.1L870.1 741.9L866.3 738.1Z" fill="#434348" fill-opacity="0.5"/><rect x="1114.8" y="740.5" width="7.6" height="7.6" fill="#90ed7d" fill-opacity="0.5"/><circle cx="959.3" cy="726.1" r="3.8" fill="#f15c80" fill-opacity="0.46"/><circle cx="907.5" cy="734.4" r="3.8" fill="#f15c80" fill-opacity="0.46"/><circle cx="891.6" cy="655.3" r="3.8" fill="#f15c80" fill-opacity="0.46"/><path d="M1105.9 636.3L1109.7 643.9L1102.1 643.9Z" fill="#f7a35c" fill-opacity="0.5"/><path d="M993.8 663.7L997.6 667.5L993.8 671.3L990.0 667.5Z" fill="#e4d354" fill-opacity="0.55"/><circle cx="973.4" cy="696.4" r="3.8" fill="#f15c80" fill-opacity="0.46"/><rect x="1074.2" y="702.7" width="7.6" height="7.6" fill="#90ed7d" fill-opacity="0.5"/><circle cx="1071.4" cy="690.2" r="3.8" fill="#f15c80" fill-opacity="0.46"/><circle cx="944.6" cy="710.2" r="3.8" fill="#f15c80" fill-opacity="0.46"/><circle cx="1040.7" cy="647.9" r="3.8" fill="#f15c80" fill-opacity="0.46"/><rect x="893.9" y="697.9" width="7.6" height="7.6" fill="#90ed7d" fill-opacity="0.5"/><path d="M1015.5 722.1L1019.3 725.9L1015.5 729.7L1011.7 725.9Z" fill="#434348" fill-opacity="0.5"/><circle cx="895.2" cy="647.6" r="3.8" fill="#f15c80" fill-opacity="0.46"/><circle cx="874.6" cy="683.4" r="3.8" fill="#f15c80" fill-opacity="0.46"/><path d="M1094.0 683.2L1097.8 687.0L1094.0 690.8L1090.2 687.0Z" fill="#434348" fill-opacity="0.5"/><path d="M946.8 696.3L950.6 700.1L946.8 703.9L943.0 700.1Z" fill="#e4d354" fill-opacity="0.55"/><rect x="1093.9" y="659.0" width="7.6" height="7.6" fill="#90ed7d" fill-opacity="0.5"/><circle cx="1054.5" cy="654.8" r="3.8" fill="#f15c80" fill-opacity="0.46"/><circle cx="884.6" cy="728.1" r="3.8" fill="#f15c80" fill-opacity="0.46"/><rect x="855.8" y="664.1" width="7.6" height="7.6" fill="#90ed7d" fill-opacity="0.5"/><path d="M927.3 659.9L931.1 667.5L923.5 667.5Z" fill="#f7a35c" fill-opacity="0.5"/><path d="M1043.0 722.3L1046.8 726.1L1043.0 729.9L1039.2 726.1Z" fill="#e4d354" fill-opacity="0.55"/><path d="M1066.3 663.7L1070.1 671.3L1062.5 671.3Z" fill="#f7a35c" fill-opacity="0.5"/><circle cx="861.5" cy="726.1" r="3.8" fill="#f15c80" fill-opacity="0.46"/><circle cx="918.7" cy="727.2" r="3.8" fill="#f15c80" fill-opacity="0.46"/><circle cx="1001.3" cy="712.2" r="3.8" fill="#f15c80" fill-opacity="0.46"/><path d="M993.1 710.3L996.9 714.1L993.1 717.9L989.3 714.1Z" fill="#434348" fill-opacity="0.5"/><circle cx="1075.4" cy="745.6" r="3.8" fill="#f15c80" fill-opacity="0.46"/><rect x="1030.5" y="728.3" width="7.6" height="7.6" fill="#90ed7d" fill-opacity="0.5"/><rect x="1110.5" y="648.0" width="7.6" height="7.6" fill="#90ed7d" fill-opacity="0.5"/><path d="M1052.1 644.2L1055.9 648.0L1052.1 651.8L1048.3 648.0Z" fill="#e4d354" fill-opacity="0.55"/><circle cx="1087.8" cy="726.1" r="3.8" fill="#f15c80" fill-opacity="0.46"/><circle cx="985.6" cy="675.6" r="3.8" fill="#f15c80" fill-opacity="0.46"/><rect x="918.7" y="640.3" width="7.6" height="7.6" fill="#90ed7d" fill-opacity="0.5"/><rect x="1051.5" y="683.2" width="7.6" height="7.6" fill="#90ed7d" fill-opacity="0.5"/><rect x="919.0" y="642.0" width="7.6" height="7.6" fill="#90ed7d" fill-opacity="0.5"/><circle cx="908.7" cy="660.9" r="3.8" fill="#f15c80" fill-opacity="0.46"/><path d="M936.7 725.0L940.5 732.6L932.9 732.6Z" fill="#f7a35c" fill-opacity="0.5"/><circle cx="970.0" cy="740.8" r="3.8" fill="#f15c80" fill-opacity="0.46"/><circle cx="908.8" cy="705.5" r="3.8" fill="#f15c80" fill-opacity="0.46"/><circle cx="1066.2" cy="667.5" r="3.8" fill="#f15c80" fill-opacity="0.46"/><circle cx="964.0" cy="683.6" r="3.8" fill="#f15c80" fill-opacity="0.46"/><circle cx="1086.7" cy="736.9" r="3.8" fill="#f15c80" fill-opacity="0.46"/><circle cx="972.3" cy="690.5" r="3.8" fill="#f15c80" fill-opacity="0.46"/><circle cx="958.2" cy="667.5" r="3.8" fill="#f15c80" fill-opacity="0.46"/><circle cx="901.4" cy="726.1" r="3.8" fill="#f15c80" fill-opacity="0.46"/><rect x="1112.1" y="734.2" width="7.6" height="7.6" fill="#90ed7d" fill-opacity="0.5"/><circle cx="1085.6" cy="713.6" r="3.8" fill="#f15c80" fill-opacity="0.46"/><circle cx="1021.6" cy="740.2" r="3.8" fill="#f15c80" fill-opacity="0.46"/><circle cx="1095.4" cy="733.2" r="3.8" fill="#f15c80" fill-opacity="0.46"/><circle cx="1061.8" cy="646.1" r="3.8" fill="#f15c80" fill-opacity="0.46"/><circle cx="1002.6" cy="726.1" r="3.8" fill="#f15c80" fill-opacity="0.46"/><path d="M1043.2 688.9L1047.0 692.7L1043.2 696.5L1039.4 692.7Z" fill="#434348" fill-opacity="0.5"/><circle cx="1071.3" cy="745.6" r="3.8" fill="#f15c80" fill-opacity="0.46"/><rect x="947.7" y="646.6" width="7.6" height="7.6" fill="#90ed7d" fill-opacity="0.5"/><circle cx="1092.6" cy="726.1" r="3.8" fill="#f15c80" fill-opacity="0.46"/><path d="M980.8 722.3L984.6 726.1L980.8 729.9L977.0 726.1Z" fill="#434348" fill-opacity="0.5"/><circle cx="875.5" cy="726.1" r="3.8" fill="#f15c80" fill-opacity="0.46"/><rect x="1019.0" y="733.6" width="7.6" height="7.6" fill="#90ed7d" fill-opacity="0.5"/><circle cx="976.9" cy="659.2" r="3.8" fill="#f15c80" fill-opacity="0.46"/><rect x="1034.3" y="702.7" width="7.6" height="7.6" fill="#90ed7d" fill-opacity="0.5"/><path d="M1022.1 737.2L1025.9 744.8L1018.3 744.8Z" fill="#f7a35c" fill-opacity="0.5"/><circle cx="1104.2" cy="713.7" r="3.8" fill="#f15c80" fill-opacity="0.46"/><circle cx="1056.1" cy="659.6" r="3.8" fill="#f15c80" fill-opacity="0.46"/><path d="M891.8 642.3L895.6 649.9L888.0 649.9Z" fill="#f7a35c" fill-opacity="0.5"/><rect x="1007.4" y="741.8" width="7.6" height="7.6" fill="#90ed7d" fill-opacity="0.5"/><circle cx="956.5" cy="742.7" r="3.8" fill="#f15c80" fill-opacity="0.46"/><path d="M973.4 716.7L977.2 724.3L969.6 724.3Z" fill="#f7a35c" fill-opacity="0.5"/><circle cx="1116.8" cy="734.2" r="3.8" fill="#f15c80" fill-opacity="0.46"/><path d="M1081.4 740.9L1085.2 748.5L1077.6 748.5Z" fill="#f7a35c" fill-opacity="0.5"/><circle cx="1038.3" cy="690.4" r="3.8" fill="#f15c80" fill-opacity="0.46"/><rect x="1022.3" y="655.0" width="7.6" height="7.6" fill="#90ed7d" fill-opacity="0.5"/><rect x="1078.0" y="656.2" width="7.6" height="7.6" fill="#90ed7d" fill-opacity="0.5"/><circle cx="943.1" cy="726.1" r="3.8" fill="#f15c80" fill-opacity="0.46"/><circle cx="910.6" cy="705.8" r="3.8" fill="#f15c80" fill-opacity="0.46"/><path d="M1092.9 665.9L1096.7 673.5L1089.1 673.5Z" fill="#f7a35c" fill-opacity="0.5"/><circle cx="1113.8" cy="666.9" r="3.8" fill="#f15c80" fill-opacity="0.46"/><path d="M959.4 722.3L963.2 726.1L959.4 729.9L955.6 726.1Z" fill="#434348" fill-opacity="0.5"/><circle cx="918.7" cy="724.2" r="3.8" fill="#f15c80" fill-opacity="0.46"/><rect x="1034.0" y="711.7" width="7.6" height="7.6" fill="#90ed7d" fill-opacity="0.5"/><circle cx="1037.9" cy="708.8" r="3.8" fill="#f15c80" fill-opacity="0.46"/><circle cx="886.1" cy="667.5" r="3.8" fill="#f15c80" fill-opacity="0.46"/><circle cx="930.6" cy="741.9" r="3.8" fill="#f15c80" fill-opacity="0.46"/><circle cx="1083.2" cy="712.0" r="3.8" fill="#f15c80" fill-opacity="0.46"/><circle cx="1097.0" cy="745.6" r="3.8" fill="#f15c80" fill-opacity="0.46"/><circle cx="952.7" cy="718.5" r="3.8" fill="#7cb5ec" fill-opacity="0.55"/><circle cx="1082.5" cy="701.6" r="3.8" fill="#f15c80" fill-opacity="0.46"/><circle cx="1064.7" cy="682.3" r="3.8" fill="#f15c80" fill-opacity="0.46"/><circle cx="1066.9" cy="653.0" r="3.8" fill="#f15c80" fill-opacity="0.46"/><circle cx="907.3" cy="667.9" r="3.8" fill="#f15c80" fill-opacity="0.46"/><path d="M860.7 713.4L864.5 721.0L856.9 721.0Z" fill="#f7a35c" fill-opacity="0.5"/><circle cx="878.8" cy="734.2" r="3.8" fill="#f15c80" fill-opacity="0.46"/><circle cx="894.8" cy="731.3" r="3.8" fill="#f15c80" fill-opacity="0.46"/><circle cx="976.5" cy="736.9" r="3.8" fill="#f15c80" fill-opacity="0.46"/><rect x="998.6" y="637.9" width="7.6" height="7.6" fill="#90ed7d" fill-opacity="0.5"/><path d="M991.9 663.7L995.7 667.5L991.9 671.3L988.1 667.5Z" fill="#e4d354" fill-opacity="0.55"/><circle cx="920.1" cy="657.0" r="3.8" fill="#f15c80" fill-opacity="0.46"/><circle cx="934.6" cy="701.8" r="3.8" fill="#f15c80" fill-opacity="0.46"/><circle cx="979.9" cy="687.0" r="3.8" fill="#7cb5ec" fill-opacity="0.55"/><circle cx="976.8" cy="717.2" r="3.8" fill="#f15c80" fill-opacity="0.46"/><rect x="1023.0" y="722.3" width="7.6" height="7.6" fill="#90ed7d" fill-opacity="0.5"/><path d="M869.4 702.7L873.2 706.5L869.4 710.3L865.6 706.5Z" fill="#434348" fill-opacity="0.5"/><circle cx="1053.9" cy="696.9" r="3.8" fill="#f15c80" fill-opacity="0.46"/><circle cx="1109.1" cy="667.5" r="3.8" fill="#f15c80" fill-opacity="0.46"/><path d="M969.2 702.8L976.8 702.8L973.0 710.4Z" fill="#8085e9" fill-opacity="0.55"/><circle cx="1031.7" cy="726.0" r="3.8" fill="#f15c80" fill-opacity="0.46"/><circle cx="1014.8" cy="726.1" r="3.8" fill="#f15c80" fill-opacity="0.46"/><path d="M888.0 722.3L891.8 726.1L888.0 729.9L884.2 726.1Z" fill="#e4d354" fill-opacity="0.55"/><rect x="968.1" y="735.5" width="7.6" height="7.6" fill="#90ed7d" fill-opacity="0.5"/><circle cx="851.6" cy="666.5" r="3.8" fill="#f15c80" fill-opacity="0.46"/><circle cx="914.2" cy="722.3" r="3.8" fill="#f15c80" fill-opacity="0.46"/><path d="M1004.5 710.8L1008.3 714.6L1004.5 718.4L1000.7 714.6Z" fill="#434348" fill-opacity="0.5"/><circle cx="991.6" cy="706.5" r="3.8" fill="#f15c80" fill-opacity="0.46"/><rect x="1022.0" y="646.7" width="7.6" height="7.6" fill="#90ed7d" fill-opacity="0.5"/><circle cx="1111.7" cy="667.5" r="3.8" fill="#f15c80" fill-opacity="0.46"/><rect x="1055.0" y="722.3" width="7.6" height="7.6" fill="#90ed7d" fill-opacity="0.5"/><circle cx="884.4" cy="736.2" r="3.8" fill="#f15c80" fill-opacity="0.46"/><path d="M1006.3 688.8L1010.1 692.6L1006.3 696.4L1002.5 692.6Z" fill="#e4d354" fill-opacity="0.55"/><circle cx="891.3" cy="721.8" r="3.8" fill="#f15c80" fill-opacity="0.46"/><circle cx="917.5" cy="721.6" r="3.8" fill="#f15c80" fill-opacity="0.46"/><circle cx="1047.4" cy="745.6" r="3.8" fill="#f15c80" fill-opacity="0.46"/><rect x="916.3" y="739.4" width="7.6" height="7.6" fill="#90ed7d" fill-opacity="0.5"/><path d="M1115.0 678.5L1118.8 682.3L1115.0 686.1L1111.2 682.3Z" fill="#434348" fill-opacity="0.5"/><circle cx="979.2" cy="745.6" r="3.8" fill="#f15c80" fill-opacity="0.46"/><circle cx="1019.3" cy="686.0" r="3.8" fill="#f15c80" fill-opacity="0.46"/><path d="M1001.7 683.2L1005.5 687.0L1001.7 690.8L997.9 687.0Z" fill="#434348" fill-opacity="0.5"/><rect x="906.4" y="730.4" width="7.6" height="7.6" fill="#90ed7d" fill-opacity="0.5"/><circle cx="1042.5" cy="717.6" r="3.8" fill="#f15c80" fill-opacity="0.46"/><rect x="999.2" y="683.2" width="7.6" height="7.6" fill="#90ed7d" fill-opacity="0.5"/><rect x="909.6" y="677.2" width="7.6" height="7.6" fill="#90ed7d" fill-opacity="0.5"/><circle cx="1047.1" cy="665.4" r="3.8" fill="#f15c80" fill-opacity="0.46"/><circle cx="909.3" cy="708.1" r="3.8" fill="#f15c80" fill-opacity="0.46"/><rect x="858.3" y="741.8" width="7.6" height="7.6" fill="#90ed7d" fill-opacity="0.5"/><circle cx="1104.4" cy="721.6" r="3.8" fill="#f15c80" fill-opacity="0.46"/><circle cx="990.9" cy="745.6" r="3.8" fill="#f15c80" fill-opacity="0.46"/><circle cx="916.6" cy="726.1" r="3.8" fill="#f15c80" fill-opacity="0.46"/><rect x="1056.0" y="729.1" width="7.6" height="7.6" fill="#90ed7d" fill-opacity="0.5"/><rect x="920.0" y="631.6" width="7.6" height="7.6" fill="#90ed7d" fill-opacity="0.5"/><circle cx="1018.0" cy="735.2" r="3.8" fill="#f15c80" fill-opacity="0.46"/><circle cx="1113.2" cy="652.6" r="3.8" fill="#f15c80" fill-opacity="0.46"/><circle cx="866.3" cy="644.7" r="3.8" fill="#f15c80" fill-opacity="0.46"/><circle cx="1058.3" cy="730.7" r="3.8" fill="#f15c80" fill-opacity="0.46"/><circle cx="879.1" cy="689.3" r="3.8" fill="#7cb5ec" fill-opacity="0.55"/><rect x="878.8" y="728.8" width="7.6" height="7.6" fill="#90ed7d" fill-opacity="0.5"/><circle cx="915.3" cy="706.7" r="3.8" fill="#f15c80" fill-opacity="0.46"/><rect x="937.4" y="740.5" width="7.6" height="7.6" fill="#90ed7d" fill-opacity="0.5"/><rect x="1091.7" y="702.7" width="7.6" height="7.6" fill="#90ed7d" fill-opacity="0.5"/><circle cx="951.4" cy="714.9" r="3.8" fill="#f15c80" fill-opacity="0.46"/><circle cx="1079.0" cy="667.5" r="3.8" fill="#f15c80" fill-opacity="0.46"/><circle cx="940.6" cy="715.4" r="3.8" fill="#f15c80" fill-opacity="0.46"/><circle cx="909.6" cy="667.5" r="3.8" fill="#f15c80" fill-opacity="0.46"/><circle cx="957.9" cy="708.1" r="3.8" fill="#f15c80" fill-opacity="0.46"/><path d="M976.9 729.0L980.7 732.8L976.9 736.6L973.1 732.8Z" fill="#434348" fill-opacity="0.5"/><path d="M990.2 702.7L994.0 710.3L986.4 710.3Z" fill="#f7a35c" fill-opacity="0.5"/><path d="M1039.2 737.6L1043.0 741.4L1039.2 745.2L1035.4 741.4Z" fill="#e4d354" fill-opacity="0.55"/><circle cx="1045.2" cy="702.4" r="3.8" fill="#f15c80" fill-opacity="0.46"/><rect x="1064.7" y="722.3" width="7.6" height="7.6" fill="#90ed7d" fill-opacity="0.5"/><rect x="894.6" y="660.8" width="7.6" height="7.6" fill="#90ed7d" fill-opacity="0.5"/><path d="M1066.7 741.8L1070.5 745.6L1066.7 749.4L1062.9 745.6Z" fill="#e4d354" fill-opacity="0.55"/><path d="M1095.8 668.9L1099.6 672.7L1095.8 676.5L1092.0 672.7Z" fill="#434348" fill-opacity="0.5"/><circle cx="963.0" cy="734.4" r="3.8" fill="#f15c80" fill-opacity="0.46"/><circle cx="1045.0" cy="726.1" r="3.8" fill="#f15c80" fill-opacity="0.46"/><circle cx="1013.5" cy="745.6" r="3.8" fill="#f15c80" fill-opacity="0.46"/><rect x="882.2" y="712.1" width="7.6" height="7.6" fill="#90ed7d" fill-opacity="0.5"/><circle cx="960.2" cy="726.0" r="3.8" fill="#f15c80" fill-opacity="0.46"/><circle cx="900.2" cy="723.4" r="3.8" fill="#f15c80" fill-opacity="0.46"/><circle cx="1115.9" cy="688.5" r="3.8" fill="#f15c80" fill-opacity="0.46"/><rect x="882.9" y="698.9" width="7.6" height="7.6" fill="#90ed7d" fill-opacity="0.5"/><circle cx="1037.8" cy="693.2" r="3.8" fill="#f15c80" fill-opacity="0.46"/><circle cx="1030.0" cy="728.0" r="3.8" fill="#f15c80" fill-opacity="0.46"/><path d="M1065.5 693.0L1069.3 700.6L1061.7 700.6Z" fill="#f7a35c" fill-opacity="0.5"/><circle cx="1095.0" cy="726.1" r="3.8" fill="#f15c80" fill-opacity="0.46"/><circle cx="947.3" cy="687.8" r="3.8" fill="#f15c80" fill-opacity="0.46"/><circle cx="1015.2" cy="706.5" r="3.8" fill="#f15c80" fill-opacity="0.46"/><circle cx="1099.3" cy="726.1" r="3.8" fill="#f15c80" fill-opacity="0.46"/><circle cx="1037.6" cy="745.6" r="3.8" fill="#f15c80" fill-opacity="0.46"/><circle cx="909.8" cy="734.7" r="3.8" fill="#f15c80" fill-opacity="0.46"/><circle cx="900.1" cy="698.9" r="3.8" fill="#f15c80" fill-opacity="0.46"/><path d="M1055.2 737.2L1059.0 744.8L1051.4 744.8Z" fill="#f7a35c" fill-opacity="0.5"/><circle cx="1021.0" cy="726.1" r="3.8" fill="#f15c80" fill-opacity="0.46"/><rect x="1111.1" y="689.2" width="7.6" height="7.6" fill="#90ed7d" fill-opacity="0.5"/><circle cx="911.1" cy="660.1" r="3.8" fill="#f15c80" fill-opacity="0.46"/><circle cx="888.8" cy="738.4" r="3.8" fill="#f15c80" fill-opacity="0.46"/><rect x="852.2" y="672.1" width="7.6" height="7.6" fill="#90ed7d" fill-opacity="0.5"/><path d="M1013.0 673.9L1016.8 677.7L1013.0 681.5L1009.2 677.7Z" fill="#434348" fill-opacity="0.5"/><circle cx="952.8" cy="744.9" r="3.8" fill="#f15c80" fill-opacity="0.46"/><circle cx="1031.9" cy="700.0" r="3.8" fill="#f15c80" fill-opacity="0.46"/><path d="M1065.9 650.1L1069.7 653.9L1065.9 657.7L1062.1 653.9Z" fill="#434348" fill-opacity="0.5"/><rect x="886.8" y="663.7" width="7.6" height="7.6" fill="#90ed7d" fill-opacity="0.5"/><path d="M1009.0 731.2L1012.8 735.0L1009.0 738.8L1005.2 735.0Z" fill="#434348" fill-opacity="0.5"/><circle cx="923.3" cy="706.5" r="3.8" fill="#f15c80" fill-opacity="0.46"/><circle cx="1027.7" cy="693.9" r="3.8" fill="#f15c80" fill-opacity="0.46"/><path d="M1056.5 683.2L1060.3 690.8L1052.7 690.8Z" fill="#f7a35c" fill-opacity="0.5"/><circle cx="996.4" cy="687.0" r="3.8" fill="#7cb5ec" fill-opacity="0.55"/><circle cx="1072.1" cy="735.1" r="3.8" fill="#f15c80" fill-opacity="0.46"/><path d="M856.3 663.7L860.1 667.5L856.3 671.3L852.5 667.5Z" fill="#434348" fill-opacity="0.5"/><circle cx="985.1" cy="655.4" r="3.8" fill="#f15c80" fill-opacity="0.46"/><circle cx="1074.3" cy="726.1" r="3.8" fill="#f15c80" fill-opacity="0.46"/><circle cx="958.8" cy="706.5" r="3.8" fill="#f15c80" fill-opacity="0.46"/><circle cx="948.4" cy="674.2" r="3.8" fill="#f15c80" fill-opacity="0.46"/><path d="M948.4 724.8L952.2 728.6L948.4 732.4L944.6 728.6Z" fill="#434348" fill-opacity="0.5"/><path d="M953.2 738.3L957.0 742.1L953.2 745.9L949.4 742.1Z" fill="#e4d354" fill-opacity="0.55"/><circle cx="925.4" cy="672.4" r="3.8" fill="#f15c80" fill-opacity="0.46"/><path d="M914.3 741.8L918.1 745.6L914.3 749.4L910.5 745.6Z" fill="#e4d354" fill-opacity="0.55"/><circle cx="987.1" cy="745.4" r="3.8" fill="#f15c80" fill-opacity="0.46"/><circle cx="1114.8" cy="744.5" r="3.8" fill="#f15c80" fill-opacity="0.46"/><path d="M1009.8 722.3L1013.6 726.1L1009.8 729.9L1006.0 726.1Z" fill="#434348" fill-opacity="0.5"/><path d="M874.9 663.7L878.7 671.3L871.1 671.3Z" fill="#f7a35c" fill-opacity="0.5"/><circle cx="1114.0" cy="737.4" r="3.8" fill="#f15c80" fill-opacity="0.46"/><circle cx="877.3" cy="745.6" r="3.8" fill="#7cb5ec" fill-opacity="0.55"/><rect x="1106.7" y="666.3" width="7.6" height="7.6" fill="#90ed7d" fill-opacity="0.5"/><circle cx="1047.6" cy="745.6" r="3.8" fill="#f15c80" fill-opacity="0.46"/><rect x="1064.4" y="672.2" width="7.6" height="7.6" fill="#90ed7d" fill-opacity="0.5"/><circle cx="997.1" cy="706.5" r="3.8" fill="#f15c80" fill-opacity="0.46"/><rect x="909.8" y="741.8" width="7.6" height="7.6" fill="#90ed7d" fill-opacity="0.5"/><circle cx="939.5" cy="723.7" r="3.8" fill="#f15c80" fill-opacity="0.46"/><circle cx="938.5" cy="694.3" r="3.8" fill="#f15c80" fill-opacity="0.46"/><circle cx="1105.8" cy="726.1" r="3.8" fill="#f15c80" fill-opacity="0.46"/><path d="M1042.1 741.8L1045.9 745.6L1042.1 749.4L1038.3 745.6Z" fill="#434348" fill-opacity="0.5"/><path d="M1026.0 734.7L1029.8 742.3L1022.2 742.3Z" fill="#f7a35c" fill-opacity="0.5"/><circle cx="875.1" cy="683.8" r="3.8" fill="#f15c80" fill-opacity="0.46"/><rect x="962.8" y="663.7" width="7.6" height="7.6" fill="#90ed7d" fill-opacity="0.5"/><circle cx="956.9" cy="713.3" r="3.8" fill="#f15c80" fill-opacity="0.46"/><circle cx="957.6" cy="726.7" r="3.8" fill="#f15c80" fill-opacity="0.46"/><circle cx="874.4" cy="722.1" r="3.8" fill="#f15c80" fill-opacity="0.46"/><circle cx="1070.4" cy="706.5" r="3.8" fill="#f15c80" fill-opacity="0.46"/><rect x="1035.8" y="736.3" width="7.6" height="7.6" fill="#90ed7d" fill-opacity="0.5"/><path d="M878.0 683.2L881.8 690.8L874.2 690.8Z" fill="#f7a35c" fill-opacity="0.5"/><circle cx="1039.1" cy="745.1" r="3.8" fill="#f15c80" fill-opacity="0.46"/><rect x="1082.1" y="702.7" width="7.6" height="7.6" fill="#90ed7d" fill-opacity="0.5"/><circle cx="858.4" cy="677.1" r="3.8" fill="#f15c80" fill-opacity="0.46"/><circle cx="980.3" cy="683.8" r="3.8" fill="#f15c80" fill-opacity="0.46"/><circle cx="923.5" cy="694.9" r="3.8" fill="#f15c80" fill-opacity="0.46"/><circle cx="993.8" cy="700.2" r="3.8" fill="#f15c80" fill-opacity="0.46"/><circle cx="1042.7" cy="657.1" r="3.8" fill="#f15c80" fill-opacity="0.46"/><circle cx="945.7" cy="726.1" r="3.8" fill="#f15c80" fill-opacity="0.46"/><rect x="1030.0" y="708.8" width="7.6" height="7.6" fill="#90ed7d" fill-opacity="0.5"/><circle cx="991.9" cy="648.2" r="3.8" fill="#f15c80" fill-opacity="0.46"/><circle cx="876.8" cy="686.5" r="3.8" fill="#f15c80" fill-opacity="0.46"/><circle cx="981.5" cy="694.6" r="3.8" fill="#f15c80" fill-opacity="0.46"/><circle cx="897.5" cy="722.3" r="3.8" fill="#7cb5ec" fill-opacity="0.55"/><circle cx="879.7" cy="697.5" r="3.8" fill="#f15c80" fill-opacity="0.46"/><circle cx="951.6" cy="653.4" r="3.8" fill="#f15c80" fill-opacity="0.46"/><rect x="1015.7" y="683.2" width="7.6" height="7.6" fill="#90ed7d" fill-opacity="0.5"/><circle cx="902.1" cy="717.3" r="3.8" fill="#f15c80" fill-opacity="0.46"/><rect x="932.0" y="663.8" width="7.6" height="7.6" fill="#90ed7d" fill-opacity="0.5"/><circle cx="880.6" cy="695.2" r="3.8" fill="#f15c80" fill-opacity="0.46"/><path d="M878.8 663.7L882.6 667.5L878.8 671.3L875.0 667.5Z" fill="#434348" fill-opacity="0.5"/><rect x="947.3" y="643.7" width="7.6" height="7.6" fill="#90ed7d" fill-opacity="0.5"/><path d="M979.3 702.7L983.1 710.3L975.5 710.3Z" fill="#f7a35c" fill-opacity="0.5"/><rect x="1058.1" y="694.9" width="7.6" height="7.6" fill="#90ed7d" fill-opacity="0.5"/><circle cx="918.6" cy="719.9" r="3.8" fill="#f15c80" fill-opacity="0.46"/><circle cx="871.9" cy="684.1" r="3.8" fill="#f15c80" fill-opacity="0.46"/><rect x="985.7" y="702.7" width="7.6" height="7.6" fill="#90ed7d" fill-opacity="0.5"/><circle cx="1084.9" cy="702.3" r="3.8" fill="#f15c80" fill-opacity="0.46"/><rect x="998.8" y="644.1" width="7.6" height="7.6" fill="#90ed7d" fill-opacity="0.5"/><circle cx="1028.3" cy="696.9" r="3.8" fill="#f15c80" fill-opacity="0.46"/><rect x="1026.8" y="713.6" width="7.6" height="7.6" fill="#90ed7d" fill-opacity="0.5"/><circle cx="1076.8" cy="742.1" r="3.8" fill="#f15c80" fill-opacity="0.46"/><path d="M1035.5 684.6L1039.3 688.4L1035.5 692.2L1031.7 688.4Z" fill="#e4d354" fill-opacity="0.55"/><circle cx="1025.2" cy="687.0" r="3.8" fill="#f15c80" fill-opacity="0.46"/><rect x="890.4" y="675.1" width="7.6" height="7.6" fill="#90ed7d" fill-opacity="0.5"/><circle cx="1017.3" cy="654.4" r="3.8" fill="#f15c80" fill-opacity="0.46"/><circle cx="1115.0" cy="732.7" r="3.8" fill="#f15c80" fill-opacity="0.46"/><circle cx="1105.0" cy="667.5" r="3.8" fill="#f15c80" fill-opacity="0.46"/><circle cx="1093.0" cy="742.4" r="3.8" fill="#f15c80" fill-opacity="0.46"/><circle cx="866.7" cy="745.6" r="3.8" fill="#f15c80" fill-opacity="0.46"/><circle cx="1101.2" cy="656.9" r="3.8" fill="#f15c80" fill-opacity="0.46"/><circle cx="1102.6" cy="641.2" r="3.8" fill="#f15c80" fill-opacity="0.46"/><rect x="971.3" y="683.2" width="7.6" height="7.6" fill="#90ed7d" fill-opacity="0.5"/><circle cx="906.8" cy="683.9" r="3.8" fill="#f15c80" fill-opacity="0.46"/><circle cx="1055.2" cy="702.4" r="3.8" fill="#f15c80" fill-opacity="0.46"/><circle cx="1049.3" cy="682.1" r="3.8" fill="#f15c80" fill-opacity="0.46"/><path d="M977.2 717.8L981.0 721.6L977.2 725.4L973.4 721.6Z" fill="#434348" fill-opacity="0.5"/><circle cx="1071.4" cy="687.0" r="3.8" fill="#f15c80" fill-opacity="0.46"/><circle cx="1006.8" cy="745.3" r="3.8" fill="#f15c80" fill-opacity="0.46"/><circle cx="1076.5" cy="669.8" r="3.8" fill="#f15c80" fill-opacity="0.46"/><path d="M927.5 659.7L931.3 667.3L923.7 667.3Z" fill="#f7a35c" fill-opacity="0.5"/><circle cx="1033.0" cy="745.6" r="3.8" fill="#f15c80" fill-opacity="0.46"/><circle cx="888.0" cy="698.6" r="3.8" fill="#f15c80" fill-opacity="0.46"/><circle cx="1006.5" cy="680.5" r="3.8" fill="#f15c80" fill-opacity="0.46"/><circle cx="1078.2" cy="721.5" r="3.8" fill="#f15c80" fill-opacity="0.46"/><path d="M1004.4 663.7L1008.2 671.3L1000.6 671.3Z" fill="#f7a35c" fill-opacity="0.5"/><rect x="906.1" y="696.8" width="7.6" height="7.6" fill="#90ed7d" fill-opacity="0.5"/><circle cx="1024.7" cy="706.5" r="3.8" fill="#f15c80" fill-opacity="0.46"/><circle cx="1078.8" cy="726.1" r="3.8" fill="#f15c80" fill-opacity="0.46"/><circle cx="870.6" cy="726.1" r="3.8" fill="#f15c80" fill-opacity="0.46"/><circle cx="1064.8" cy="726.1" r="3.8" fill="#f15c80" fill-opacity="0.46"/><circle cx="876.6" cy="667.5" r="3.8" fill="#f15c80" fill-opacity="0.46"/><path d="M955.3 688.9L959.1 692.7L955.3 696.5L951.5 692.7Z" fill="#434348" fill-opacity="0.5"/><path d="M978.4 674.0L982.2 681.6L974.6 681.6Z" fill="#f7a35c" fill-opacity="0.5"/><rect x="910.7" y="732.1" width="7.6" height="7.6" fill="#90ed7d" fill-opacity="0.5"/><path d="M1117.3 725.9L1121.1 729.7L1117.3 733.5L1113.5 729.7Z" fill="#434348" fill-opacity="0.5"/><rect x="1044.4" y="662.3" width="7.6" height="7.6" fill="#90ed7d" fill-opacity="0.5"/><circle cx="968.9" cy="704.8" r="3.8" fill="#f15c80" fill-opacity="0.46"/><rect x="922.3" y="663.7" width="7.6" height="7.6" fill="#90ed7d" fill-opacity="0.5"/><path d="M948.7 681.1L952.5 684.9L948.7 688.7L944.9 684.9Z" fill="#434348" fill-opacity="0.5"/><circle cx="991.3" cy="699.2" r="3.8" fill="#f15c80" fill-opacity="0.46"/><circle cx="1114.7" cy="711.8" r="3.8" fill="#f15c80" fill-opacity="0.46"/><circle cx="970.9" cy="706.5" r="3.8" fill="#f15c80" fill-opacity="0.46"/><circle cx="889.0" cy="706.5" r="3.8" fill="#f15c80" fill-opacity="0.46"/><circle cx="969.6" cy="647.9" r="3.8" fill="#f15c80" fill-opacity="0.46"/><circle cx="1044.7" cy="730.2" r="3.8" fill="#f15c80" fill-opacity="0.46"/><circle cx="888.5" cy="745.6" r="3.8" fill="#f15c80" fill-opacity="0.46"/><circle cx="884.6" cy="715.1" r="3.8" fill="#f15c80" fill-opacity="0.46"/><path d="M859.7 644.1L863.5 651.7L855.9 651.7Z" fill="#f7a35c" fill-opacity="0.5"/><rect x="1081.7" y="683.2" width="7.6" height="7.6" fill="#90ed7d" fill-opacity="0.5"/><rect x="919.8" y="702.7" width="7.6" height="7.6" fill="#90ed7d" fill-opacity="0.5"/><rect x="925.7" y="731.4" width="7.6" height="7.6" fill="#90ed7d" fill-opacity="0.5"/><circle cx="910.0" cy="671.5" r="3.8" fill="#f15c80" fill-opacity="0.46"/><path d="M1022.1 732.2L1029.7 732.2L1025.9 739.8Z" fill="#8085e9" fill-opacity="0.55"/><circle cx="918.4" cy="706.5" r="3.8" fill="#f15c80" fill-opacity="0.46"/><circle cx="1029.5" cy="694.1" r="3.8" fill="#f15c80" fill-opacity="0.46"/><rect x="1047.7" y="672.8" width="7.6" height="7.6" fill="#90ed7d" fill-opacity="0.5"/><circle cx="1109.3" cy="716.4" r="3.8" fill="#f15c80" fill-opacity="0.46"/><rect x="1102.5" y="709.4" width="7.6" height="7.6" fill="#90ed7d" fill-opacity="0.5"/><circle cx="933.2" cy="725.0" r="3.8" fill="#f15c80" fill-opacity="0.46"/><rect x="901.6" y="741.8" width="7.6" height="7.6" fill="#90ed7d" fill-opacity="0.5"/><circle cx="1081.3" cy="708.9" r="3.8" fill="#f15c80" fill-opacity="0.46"/><circle cx="951.8" cy="700.2" r="3.8" fill="#f15c80" fill-opacity="0.46"/><path d="M909.9 741.8L913.7 745.6L909.9 749.4L906.1 745.6Z" fill="#e4d354" fill-opacity="0.55"/><rect x="982.4" y="634.4" width="7.6" height="7.6" fill="#90ed7d" fill-opacity="0.5"/><path d="M1070.7 643.4L1074.5 651.0L1066.9 651.0Z" fill="#f7a35c" fill-opacity="0.5"/><circle cx="920.3" cy="687.0" r="3.8" fill="#f15c80" fill-opacity="0.46"/><path d="M1020.5 643.4L1024.3 651.0L1016.7 651.0Z" fill="#f7a35c" fill-opacity="0.5"/><circle cx="1103.4" cy="726.1" r="3.8" fill="#f15c80" fill-opacity="0.46"/><path d="M1025.3 647.6L1029.1 651.4L1025.3 655.2L1021.5 651.4Z" fill="#434348" fill-opacity="0.5"/><circle cx="1056.8" cy="745.6" r="3.8" fill="#f15c80" fill-opacity="0.46"/><circle cx="1109.3" cy="647.9" r="3.8" fill="#f15c80" fill-opacity="0.46"/><circle cx="971.9" cy="716.8" r="3.8" fill="#f15c80" fill-opacity="0.46"/><circle cx="956.0" cy="706.5" r="3.8" fill="#f15c80" fill-opacity="0.46"/><path d="M899.0 741.8L906.6 741.8L902.8 749.4Z" fill="#8085e9" fill-opacity="0.55"/><circle cx="1078.1" cy="744.1" r="3.8" fill="#f15c80" fill-opacity="0.46"/><circle cx="1018.4" cy="700.1" r="3.8" fill="#f15c80" fill-opacity="0.46"/><circle cx="875.0" cy="673.2" r="3.8" fill="#f15c80" fill-opacity="0.46"/><rect x="1083.8" y="736.2" width="7.6" height="7.6" fill="#90ed7d" fill-opacity="0.5"/><rect x="919.4" y="695.9" width="7.6" height="7.6" fill="#90ed7d" fill-opacity="0.5"/><path d="M1017.3 702.7L1021.1 710.3L1013.5 710.3Z" fill="#f7a35c" fill-opacity="0.5"/><rect x="1110.9" y="665.0" width="7.6" height="7.6" fill="#90ed7d" fill-opacity="0.5"/><rect x="1104.9" y="635.7" width="7.6" height="7.6" fill="#90ed7d" fill-opacity="0.5"/><path d="M1068.1 668.5L1071.9 676.1L1064.3 676.1Z" fill="#f7a35c" fill-opacity="0.5"/><rect x="1106.9" y="711.9" width="7.6" height="7.6" fill="#90ed7d" fill-opacity="0.5"/><circle cx="942.5" cy="706.5" r="3.8" fill="#f15c80" fill-opacity="0.46"/><path d="M851.9 693.7L855.7 697.5L851.9 701.3L848.1 697.5Z" fill="#434348" fill-opacity="0.5"/><path d="M864.5 741.8L868.3 745.6L864.5 749.4L860.7 745.6Z" fill="#434348" fill-opacity="0.5"/><rect x="1003.5" y="680.4" width="7.6" height="7.6" fill="#90ed7d" fill-opacity="0.5"/><path d="M1073.8 643.7L1077.6 651.3L1070.0 651.3Z" fill="#f7a35c" fill-opacity="0.5"/><circle cx="1086.6" cy="676.9" r="3.8" fill="#f15c80" fill-opacity="0.46"/><circle cx="996.9" cy="664.1" r="3.8" fill="#f15c80" fill-opacity="0.46"/><path d="M1058.7 643.1L1062.5 650.7L1054.9 650.7Z" fill="#f7a35c" fill-opacity="0.5"/><circle cx="943.3" cy="745.6" r="3.8" fill="#f15c80" fill-opacity="0.46"/><circle cx="1031.4" cy="691.1" r="3.8" fill="#f15c80" fill-opacity="0.46"/><circle cx="913.7" cy="730.2" r="3.8" fill="#f15c80" fill-opacity="0.46"/><circle cx="924.8" cy="726.1" r="3.8" fill="#f15c80" fill-opacity="0.46"/><path d="M1023.3 722.3L1027.1 729.9L1019.5 729.9Z" fill="#f7a35c" fill-opacity="0.5"/><circle cx="1059.3" cy="730.6" r="3.8" fill="#f15c80" fill-opacity="0.46"/><rect x="1098.3" y="679.4" width="7.6" height="7.6" fill="#90ed7d" fill-opacity="0.5"/><circle cx="976.2" cy="742.6" r="3.8" fill="#f15c80" fill-opacity="0.46"/><path d="M950.2 663.7L954.0 671.3L946.4 671.3Z" fill="#f7a35c" fill-opacity="0.5"/><circle cx="901.1" cy="706.5" r="3.8" fill="#f15c80" fill-opacity="0.46"/><rect x="1089.2" y="697.5" width="7.6" height="7.6" fill="#90ed7d" fill-opacity="0.5"/><circle cx="990.2" cy="695.0" r="3.8" fill="#f15c80" fill-opacity="0.46"/><path d="M1010.2 711.5L1014.0 715.3L1010.2 719.1L1006.4 715.3Z" fill="#434348" fill-opacity="0.5"/><circle cx="970.2" cy="720.5" r="3.8" fill="#f15c80" fill-opacity="0.46"/><circle cx="942.4" cy="717.0" r="3.8" fill="#f15c80" fill-opacity="0.46"/><circle cx="995.4" cy="745.6" r="3.8" fill="#f15c80" fill-opacity="0.46"/><rect x="948.1" y="705.2" width="7.6" height="7.6" fill="#90ed7d" fill-opacity="0.5"/><circle cx="1027.7" cy="706.5" r="3.8" fill="#f15c80" fill-opacity="0.46"/><rect x="1015.9" y="713.6" width="7.6" height="7.6" fill="#90ed7d" fill-opacity="0.5"/><circle cx="1072.3" cy="666.4" r="3.8" fill="#f15c80" fill-opacity="0.46"/><rect x="895.7" y="677.3" width="7.6" height="7.6" fill="#90ed7d" fill-opacity="0.5"/><circle cx="939.2" cy="744.0" r="3.8" fill="#f15c80" fill-opacity="0.46"/><path d="M1063.2 654.2L1067.0 661.8L1059.4 661.8Z" fill="#f7a35c" fill-opacity="0.5"/><path d="M1005.2 663.7L1009.0 671.3L1001.4 671.3Z" fill="#f7a35c" fill-opacity="0.5"/><circle cx="954.1" cy="720.4" r="3.8" fill="#f15c80" fill-opacity="0.46"/><circle cx="1055.7" cy="667.5" r="3.8" fill="#f15c80" fill-opacity="0.46"/><circle cx="1030.8" cy="720.6" r="3.8" fill="#f15c80" fill-opacity="0.46"/><rect x="1044.5" y="700.3" width="7.6" height="7.6" fill="#90ed7d" fill-opacity="0.5"/><circle cx="1048.5" cy="667.5" r="3.8" fill="#f15c80" fill-opacity="0.46"/><rect x="883.8" y="702.7" width="7.6" height="7.6" fill="#90ed7d" fill-opacity="0.5"/><path d="M1106.3 657.6L1110.1 661.4L1106.3 665.2L1102.5 661.4Z" fill="#434348" fill-opacity="0.5"/><circle cx="1109.4" cy="726.1" r="3.8" fill="#f15c80" fill-opacity="0.46"/><circle cx="965.7" cy="667.5" r="3.8" fill="#f15c80" fill-opacity="0.46"/><circle cx="1095.6" cy="745.6" r="3.8" fill="#f15c80" fill-opacity="0.46"/><circle cx="896.4" cy="691.6" r="3.8" fill="#f15c80" fill-opacity="0.46"/><circle cx="1060.9" cy="688.0" r="3.8" fill="#f15c80" fill-opacity="0.46"/><circle cx="1091.7" cy="687.0" r="3.8" fill="#f15c80" fill-opacity="0.46"/><circle cx="1077.5" cy="665.0" r="3.8" fill="#f15c80" fill-opacity="0.46"/><rect x="960.6" y="663.7" width="7.6" height="7.6" fill="#90ed7d" fill-opacity="0.5"/><circle cx="879.3" cy="724.5" r="3.8" fill="#f15c80" fill-opacity="0.46"/><circle cx="1019.1" cy="726.1" r="3.8" fill="#f15c80" fill-opacity="0.46"/><circle cx="1104.6" cy="662.7" r="3.8" fill="#f15c80" fill-opacity="0.46"/><rect x="949.3" y="643.4" width="7.6" height="7.6" fill="#90ed7d" fill-opacity="0.5"/><circle cx="868.6" cy="647.9" r="3.8" fill="#f15c80" fill-opacity="0.46"/><circle cx="884.5" cy="720.2" r="3.8" fill="#f15c80" fill-opacity="0.46"/><path d="M1030.6 702.7L1034.4 706.5L1030.6 710.3L1026.8 706.5Z" fill="#434348" fill-opacity="0.5"/><path d="M871.8 653.2L879.4 653.2L875.6 660.8Z" fill="#8085e9" fill-opacity="0.55"/><rect x="979.3" y="702.7" width="7.6" height="7.6" fill="#90ed7d" fill-opacity="0.5"/><circle cx="1089.1" cy="726.1" r="3.8" fill="#f15c80" fill-opacity="0.46"/><rect x="1000.6" y="741.8" width="7.6" height="7.6" fill="#90ed7d" fill-opacity="0.5"/><circle cx="881.0" cy="709.1" r="3.8" fill="#f15c80" fill-opacity="0.46"/><circle cx="1000.2" cy="725.3" r="3.8" fill="#f15c80" fill-opacity="0.46"/><path d="M1069.3 722.3L1073.1 729.9L1065.5 729.9Z" fill="#f7a35c" fill-opacity="0.5"/><rect x="1049.1" y="679.3" width="7.6" height="7.6" fill="#90ed7d" fill-opacity="0.5"/><path d="M1026.0 682.0L1029.8 685.8L1026.0 689.6L1022.2 685.8Z" fill="#434348" fill-opacity="0.5"/><rect x="878.6" y="689.4" width="7.6" height="7.6" fill="#90ed7d" fill-opacity="0.5"/><circle cx="954.9" cy="667.5" r="3.8" fill="#f15c80" fill-opacity="0.46"/><circle cx="1010.4" cy="745.6" r="3.8" fill="#f15c80" fill-opacity="0.46"/><path d="M925.8 734.7L929.6 738.5L925.8 742.3L922.0 738.5Z" fill="#434348" fill-opacity="0.5"/><path d="M913.4 645.3L917.2 652.9L909.6 652.9Z" fill="#f7a35c" fill-opacity="0.5"/><circle cx="911.3" cy="641.7" r="3.8" fill="#f15c80" fill-opacity="0.46"/><rect x="970.0" y="663.7" width="7.6" height="7.6" fill="#90ed7d" fill-opacity="0.5"/><path d="M1030.8 683.2L1034.6 690.8L1027.0 690.8Z" fill="#f7a35c" fill-opacity="0.5"/><circle cx="1103.6" cy="726.1" r="3.8" fill="#f15c80" fill-opacity="0.46"/><rect x="932.8" y="719.8" width="7.6" height="7.6" fill="#90ed7d" fill-opacity="0.5"/><circle cx="1108.0" cy="672.2" r="3.8" fill="#f15c80" fill-opacity="0.46"/><circle cx="1019.1" cy="741.5" r="3.8" fill="#f15c80" fill-opacity="0.46"/><rect x="890.3" y="683.2" width="7.6" height="7.6" fill="#90ed7d" fill-opacity="0.5"/><path d="M889.9 631.8L893.7 639.4L886.1 639.4Z" fill="#f7a35c" fill-opacity="0.5"/><circle cx="883.2" cy="688.1" r="3.8" fill="#f15c80" fill-opacity="0.46"/><path d="M1096.5 659.2L1100.3 666.8L1092.7 666.8Z" fill="#f7a35c" fill-opacity="0.5"/><circle cx="884.1" cy="661.0" r="3.8" fill="#f15c80" fill-opacity="0.46"/><circle cx="904.0" cy="667.5" r="3.8" fill="#f15c80" fill-opacity="0.46"/><circle cx="918.6" cy="679.0" r="3.8" fill="#f15c80" fill-opacity="0.46"/><circle cx="927.3" cy="745.6" r="3.8" fill="#f15c80" fill-opacity="0.46"/><circle cx="992.9" cy="693.6" r="3.8" fill="#f15c80" fill-opacity="0.46"/><circle cx="1055.1" cy="647.9" r="3.8" fill="#7cb5ec" fill-opacity="0.55"/><path d="M879.2 634.2L883.0 641.8L875.4 641.8Z" fill="#f7a35c" fill-opacity="0.5"/><circle cx="901.7" cy="712.6" r="3.8" fill="#f15c80" fill-opacity="0.46"/><circle cx="858.7" cy="723.0" r="3.8" fill="#7cb5ec" fill-opacity="0.55"/><path d="M915.3 662.2L919.1 666.0L915.3 669.8L911.5 666.0Z" fill="#434348" fill-opacity="0.5"/><circle cx="1088.5" cy="726.1" r="3.8" fill="#f15c80" fill-opacity="0.46"/><circle cx="999.9" cy="688.9" r="3.8" fill="#f15c80" fill-opacity="0.46"/><path d="M851.8 683.2L855.6 690.8L848.0 690.8Z" fill="#f7a35c" fill-opacity="0.5"/><circle cx="928.2" cy="732.4" r="3.8" fill="#f15c80" fill-opacity="0.46"/><path d="M959.7 703.1L963.5 710.7L955.9 710.7Z" fill="#f7a35c" fill-opacity="0.5"/><circle cx="958.1" cy="678.8" r="3.8" fill="#f15c80" fill-opacity="0.46"/><circle cx="1068.1" cy="676.3" r="3.8" fill="#f15c80" fill-opacity="0.46"/><circle cx="873.7" cy="696.2" r="3.8" fill="#f15c80" fill-opacity="0.46"/><circle cx="1042.0" cy="704.0" r="3.8" fill="#f15c80" fill-opacity="0.46"/><path d="M974.1 702.9L977.9 710.5L970.3 710.5Z" fill="#f7a35c" fill-opacity="0.5"/><rect x="1087.1" y="674.6" width="7.6" height="7.6" fill="#90ed7d" fill-opacity="0.5"/><circle cx="1091.5" cy="735.3" r="3.8" fill="#f15c80" fill-opacity="0.46"/><path d="M993.0 692.1L996.8 695.9L993.0 699.7L989.2 695.9Z" fill="#e4d354" fill-opacity="0.55"/><circle cx="1101.2" cy="687.0" r="3.8" fill="#f15c80" fill-opacity="0.46"/><path d="M1038.3 741.8L1042.1 749.4L1034.5 749.4Z" fill="#f7a35c" fill-opacity="0.5"/><path d="M889.0 722.9L892.8 730.5L885.2 730.5Z" fill="#f7a35c" fill-opacity="0.5"/><path d="M1053.5 659.4L1057.3 663.2L1053.5 667.0L1049.7 663.2Z" fill="#434348" fill-opacity="0.5"/><rect x="977.6" y="625.5" width="7.6" height="7.6" fill="#90ed7d" fill-opacity="0.5"/><path d="M1044.3 723.8L1048.1 727.6L1044.3 731.4L1040.5 727.6Z" fill="#434348" fill-opacity="0.5"/><rect x="1070.7" y="663.2" width="7.6" height="7.6" fill="#90ed7d" fill-opacity="0.5"/><circle cx="867.9" cy="714.0" r="3.8" fill="#f15c80" fill-opacity="0.46"/><circle cx="1098.1" cy="691.8" r="3.8" fill="#f15c80" fill-opacity="0.46"/><rect x="938.9" y="741.8" width="7.6" height="7.6" fill="#90ed7d" fill-opacity="0.5"/><circle cx="963.6" cy="745.6" r="3.8" fill="#f15c80" fill-opacity="0.46"/><circle cx="992.8" cy="677.7" r="3.8" fill="#f15c80" fill-opacity="0.46"/><circle cx="1050.0" cy="688.5" r="3.8" fill="#f15c80" fill-opacity="0.46"/><circle cx="857.8" cy="723.0" r="3.8" fill="#f15c80" fill-opacity="0.46"/><path d="M1082.8 720.5L1086.6 724.3L1082.8 728.1L1079.0 724.3Z" fill="#434348" fill-opacity="0.5"/><rect x="1115.3" y="722.3" width="7.6" height="7.6" fill="#90ed7d" fill-opacity="0.5"/><rect x="874.0" y="641.8" width="7.6" height="7.6" fill="#90ed7d" fill-opacity="0.5"/><circle cx="1049.5" cy="733.0" r="3.8" fill="#f15c80" fill-opacity="0.46"/><path d="M990.9 741.8L998.5 741.8L994.7 749.4Z" fill="#8085e9" fill-opacity="0.55"/><circle cx="1001.8" cy="714.5" r="3.8" fill="#f15c80" fill-opacity="0.46"/><circle cx="961.9" cy="706.5" r="3.8" fill="#f15c80" fill-opacity="0.46"/><circle cx="1042.7" cy="647.9" r="3.8" fill="#f15c80" fill-opacity="0.46"/><rect x="939.3" y="677.3" width="7.6" height="7.6" fill="#90ed7d" fill-opacity="0.5"/><circle cx="1032.0" cy="667.5" r="3.8" fill="#f15c80" fill-opacity="0.46"/><circle cx="1005.7" cy="692.4" r="3.8" fill="#f15c80" fill-opacity="0.46"/><circle cx="1010.3" cy="745.6" r="3.8" fill="#f15c80" fill-opacity="0.46"/><circle cx="917.4" cy="743.3" r="3.8" fill="#f15c80" fill-opacity="0.46"/><circle cx="1009.4" cy="745.6" r="3.8" fill="#f15c80" fill-opacity="0.46"/><circle cx="908.4" cy="706.3" r="3.8" fill="#f15c80" fill-opacity="0.46"/><circle cx="891.6" cy="745.6" r="3.8" fill="#f15c80" fill-opacity="0.46"/><circle cx="1100.7" cy="664.5" r="3.8" fill="#f15c80" fill-opacity="0.46"/><circle cx="1016.0" cy="688.4" r="3.8" fill="#f15c80" fill-opacity="0.46"/><rect x="960.0" y="674.4" width="7.6" height="7.6" fill="#90ed7d" fill-opacity="0.5"/><circle cx="1021.1" cy="745.6" r="3.8" fill="#f15c80" fill-opacity="0.46"/><circle cx="1021.7" cy="670.5" r="3.8" fill="#f15c80" fill-opacity="0.46"/><circle cx="1062.4" cy="726.1" r="3.8" fill="#f15c80" fill-opacity="0.46"/><circle cx="856.8" cy="647.7" r="3.8" fill="#f15c80" fill-opacity="0.46"/><path d="M954.8 724.6L958.6 732.2L951.0 732.2Z" fill="#f7a35c" fill-opacity="0.5"/><path d="M1032.9 739.4L1036.7 747.0L1029.1 747.0Z" fill="#f7a35c" fill-opacity="0.5"/><circle cx="865.4" cy="646.9" r="3.8" fill="#f15c80" fill-opacity="0.46"/><circle cx="877.6" cy="745.6" r="3.8" fill="#f15c80" fill-opacity="0.46"/><path d="M1076.1 663.7L1079.9 671.3L1072.3 671.3Z" fill="#f7a35c" fill-opacity="0.5"/><circle cx="961.5" cy="667.5" r="3.8" fill="#f15c80" fill-opacity="0.46"/><circle cx="941.2" cy="706.5" r="3.8" fill="#f15c80" fill-opacity="0.46"/><path d="M980.2 648.9L987.8 648.9L984.0 656.5Z" fill="#8085e9" fill-opacity="0.55"/><circle cx="1052.6" cy="676.2" r="3.8" fill="#f15c80" fill-opacity="0.46"/><rect x="864.2" y="726.8" width="7.6" height="7.6" fill="#90ed7d" fill-opacity="0.5"/><rect x="1045.2" y="714.2" width="7.6" height="7.6" fill="#90ed7d" fill-opacity="0.5"/><circle cx="921.1" cy="726.1" r="3.8" fill="#f15c80" fill-opacity="0.46"/><circle cx="930.3" cy="745.5" r="3.8" fill="#f15c80" fill-opacity="0.46"/><path d="M881.8 683.2L885.6 690.8L878.0 690.8Z" fill="#f7a35c" fill-opacity="0.5"/><circle cx="983.4" cy="706.5" r="3.8" fill="#f15c80" fill-opacity="0.46"/><circle cx="918.6" cy="695.4" r="3.8" fill="#f15c80" fill-opacity="0.46"/><circle cx="1050.9" cy="720.7" r="3.8" fill="#f15c80" fill-opacity="0.46"/><path d="M880.5 727.6L884.3 731.4L880.5 735.2L876.7 731.4Z" fill="#434348" fill-opacity="0.5"/><rect x="1029.2" y="696.0" width="7.6" height="7.6" fill="#90ed7d" fill-opacity="0.5"/><circle cx="1078.4" cy="736.4" r="3.8" fill="#f15c80" fill-opacity="0.46"/><circle cx="942.5" cy="664.1" r="3.8" fill="#f15c80" fill-opacity="0.46"/><circle cx="874.5" cy="745.6" r="3.8" fill="#f15c80" fill-opacity="0.46"/><rect x="1019.2" y="650.7" width="7.6" height="7.6" fill="#90ed7d" fill-opacity="0.5"/><circle cx="893.6" cy="745.6" r="3.8" fill="#f15c80" fill-opacity="0.46"/><path d="M1028.2 683.2L1032.0 687.0L1028.2 690.8L1024.4 687.0Z" fill="#434348" fill-opacity="0.5"/><circle cx="872.7" cy="735.8" r="3.8" fill="#f15c80" fill-opacity="0.46"/><circle cx="1009.7" cy="653.6" r="3.8" fill="#f15c80" fill-opacity="0.46"/><rect x="964.5" y="715.0" width="7.6" height="7.6" fill="#90ed7d" fill-opacity="0.5"/><circle cx="964.8" cy="713.6" r="3.8" fill="#f15c80" fill-opacity="0.46"/><circle cx="1106.9" cy="742.4" r="3.8" fill="#f15c80" fill-opacity="0.46"/><circle cx="932.0" cy="737.0" r="3.8" fill="#f15c80" fill-opacity="0.46"/><circle cx="943.0" cy="698.5" r="3.8" fill="#f15c80" fill-opacity="0.46"/><circle cx="1001.5" cy="703.0" r="3.8" fill="#f15c80" fill-opacity="0.46"/><rect x="979.4" y="741.8" width="7.6" height="7.6" fill="#90ed7d" fill-opacity="0.5"/><circle cx="957.2" cy="692.4" r="3.8" fill="#f15c80" fill-opacity="0.46"/><path d="M1024.3 701.3L1028.1 705.1L1024.3 708.9L1020.5 705.1Z" fill="#e4d354" fill-opacity="0.55"/><path d="M994.5 663.7L998.3 667.5L994.5 671.3L990.7 667.5Z" fill="#e4d354" fill-opacity="0.55"/><rect x="921.4" y="722.3" width="7.6" height="7.6" fill="#90ed7d" fill-opacity="0.5"/><circle cx="878.7" cy="736.5" r="3.8" fill="#7cb5ec" fill-opacity="0.55"/><path d="M1043.9 663.7L1047.7 671.3L1040.1 671.3Z" fill="#f7a35c" fill-opacity="0.5"/><path d="M977.2 710.6L981.0 718.2L973.4 718.2Z" fill="#f7a35c" fill-opacity="0.5"/><circle cx="860.5" cy="706.5" r="3.8" fill="#f15c80" fill-opacity="0.46"/><circle cx="919.6" cy="684.0" r="3.8" fill="#f15c80" fill-opacity="0.46"/><path d="M1110.6 663.7L1114.4 671.3L1106.8 671.3Z" fill="#f7a35c" fill-opacity="0.5"/><circle cx="884.6" cy="689.9" r="3.8" fill="#f15c80" fill-opacity="0.46"/><circle cx="1045.3" cy="691.1" r="3.8" fill="#f15c80" fill-opacity="0.46"/><rect x="1093.2" y="729.1" width="7.6" height="7.6" fill="#90ed7d" fill-opacity="0.5"/><circle cx="1064.1" cy="647.9" r="3.8" fill="#f15c80" fill-opacity="0.46"/><rect x="869.2" y="714.2" width="7.6" height="7.6" fill="#90ed7d" fill-opacity="0.5"/><circle cx="867.8" cy="702.6" r="3.8" fill="#f15c80" fill-opacity="0.46"/><circle cx="989.4" cy="706.5" r="3.8" fill="#f15c80" fill-opacity="0.46"/><circle cx="1076.4" cy="745.6" r="3.8" fill="#f15c80" fill-opacity="0.46"/><circle cx="1022.8" cy="640.9" r="3.8" fill="#f15c80" fill-opacity="0.46"/><path d="M1057.5 669.3L1061.3 676.9L1053.7 676.9Z" fill="#f7a35c" fill-opacity="0.5"/><circle cx="882.6" cy="641.7" r="3.8" fill="#f15c80" fill-opacity="0.46"/><circle cx="1115.8" cy="667.5" r="3.8" fill="#f15c80" fill-opacity="0.46"/><path d="M1094.8 648.4L1098.6 656.0L1091.0 656.0Z" fill="#f7a35c" fill-opacity="0.5"/><circle cx="908.3" cy="745.6" r="3.8" fill="#f15c80" fill-opacity="0.46"/><path d="M997.9 671.4L1001.7 679.0L994.1 679.0Z" fill="#f7a35c" fill-opacity="0.5"/></g><line x1="139.4" y1="658" x2="1122" y2="678.5" stroke="#2b908f" stroke-width="3" stroke-linecap="round"/><g><path d="M43.3 593.7 H239 Q242 593.7 242 596.7 V638.2 Q242 641.2 239 641.2 H146 L140.4 647.8 L134.8 641.2 H43.3 Q40.3 641.2 40.3 638.2 V596.7 Q40.3 593.7 43.3 593.7Z" fill="#000" opacity="0.05" transform="translate(1.5,1.5)"/><path d="M43.3 593.7 H239 Q242 593.7 242 596.7 V638.2 Q242 641.2 239 641.2 H146 L140.4 647.8 L134.8 641.2 H43.3 Q40.3 641.2 40.3 638.2 V596.7 Q40.3 593.7 43.3 593.7Z" fill="rgba(247,247,247,0.9)" stroke="#9fdf92" stroke-width="1"/></g><text x="44.80" y="614.2" font-size="13.68" fill="#333" font-weight="bold" textLength="59.80" lengthAdjust="spacingAndGlyphs">15. Sep '04</text><rect x="48" y="624" width="3.6" height="4.2" fill="#90ed7d" opacity="0.7"/><text x="59.80" y="629.8" font-size="13.44" fill="#333" font-weight="bold" textLength="92.60" lengthAdjust="spacingAndGlyphs">CONDOMINIUM</text><text x="155.00" y="629.8" font-size="13.44" fill="#333" stroke="#333" stroke-width="0.21" textLength="77.20" lengthAdjust="spacingAndGlyphs">: RM 1,455,772</text><g opacity="0.78"><circle cx="122.4" cy="863.8" r="4.0" fill="#7cb5ec" fill-opacity="0.55"/></g><text x="135.60" y="868.2" font-size="14.05" fill="#333" font-weight="bold" textLength="76.40" lengthAdjust="spacingAndGlyphs">APARTMENT</text><g opacity="0.78"><path d="M242.0 859.8L246.0 863.8L242.0 867.8L238.0 863.8Z" fill="#434348" fill-opacity="0.5"/></g><text x="255.00" y="868.2" font-size="14.05" fill="#333" font-weight="bold" textLength="68.60" lengthAdjust="spacingAndGlyphs">BUNGALOW</text><g opacity="0.78"><rect x="348.5" y="859.8" width="8.0" height="8.0" fill="#90ed7d" fill-opacity="0.5"/></g><text x="365.00" y="868.2" font-size="14.05" fill="#333" font-weight="bold" textLength="93.00" lengthAdjust="spacingAndGlyphs">CONDOMINIUM</text><g opacity="0.78"><path d="M485.8 859.8L489.8 867.8L481.8 867.8Z" fill="#f7a35c" fill-opacity="0.5"/></g><text x="499.20" y="868.2" font-size="14.05" fill="#333" font-weight="bold" textLength="44.00" lengthAdjust="spacingAndGlyphs">SEMI-D</text><g opacity="0.78"><path d="M567.6 859.8L575.6 859.8L571.6 867.8Z" fill="#8085e9" fill-opacity="0.55"/></g><text x="583.80" y="868.2" font-size="14.05" fill="#333" font-weight="bold" textLength="122.20" lengthAdjust="spacingAndGlyphs">SERVICE RESIDENCE</text><g opacity="0.78"><circle cx="734.0" cy="863.8" r="4.0" fill="#f15c80" fill-opacity="0.46"/></g><text x="748.00" y="868.2" font-size="14.05" fill="#333" font-weight="bold" textLength="101.00" lengthAdjust="spacingAndGlyphs">TERRACE HOUSE</text><g opacity="0.78"><path d="M877.0 859.8L881.0 863.8L877.0 867.8L873.0 863.8Z" fill="#e4d354" fill-opacity="0.55"/></g><text x="891.00" y="868.2" font-size="14.05" fill="#333" font-weight="bold" textLength="82.00" lengthAdjust="spacingAndGlyphs">TOWN HOUSE</text><rect x="994" y="862.5" width="15.6" height="2.2" fill="#2b908f"/><text x="1015.20" y="868.2" font-size="14.05" fill="#333" font-weight="bold" textLength="72.60" lengthAdjust="spacingAndGlyphs">TREND LINE</text>
</svg>
</body></html>
